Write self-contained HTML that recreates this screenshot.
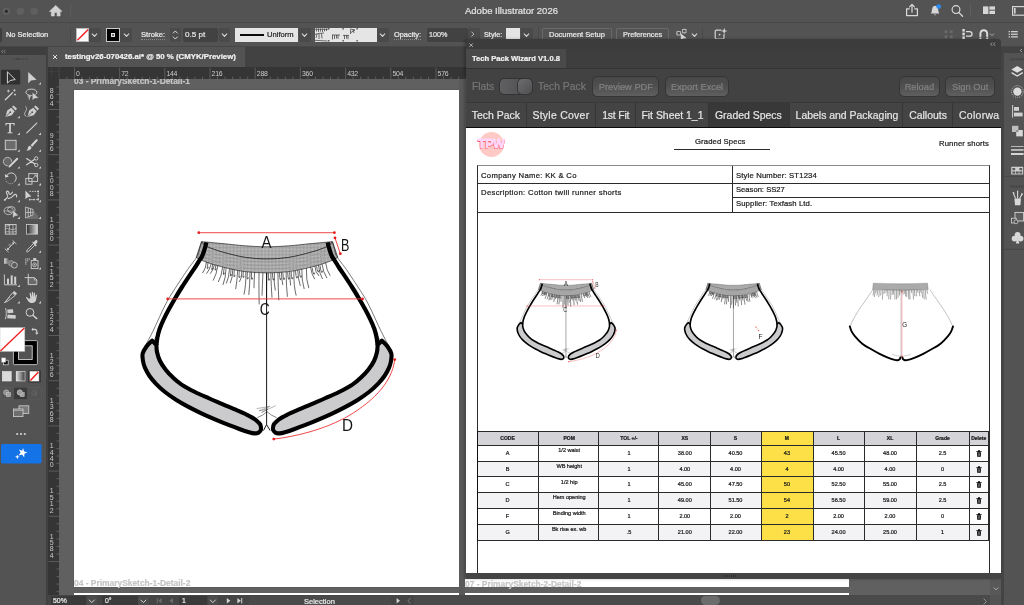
<!DOCTYPE html>
<html>
<head>
<meta charset="utf-8">
<title>Adobe Illustrator 2026</title>
<style>
*{box-sizing:border-box;margin:0;padding:0}
html,body{width:1024px;height:605px;overflow:hidden;background:#535353}
body{position:relative;font-family:"Liberation Sans",sans-serif;color:#e6e6e6;font-size:10px}
.abs{position:absolute}
.t{position:absolute;white-space:nowrap;line-height:1;will-change:transform;-webkit-text-stroke:0.22px}
svg{position:absolute;overflow:visible}
/* top bars */
#titlebar{left:0;top:0;width:1024px;height:22px;background:#535353}
#tline{left:0;top:22px;width:1024px;height:1px;background:#484848}
#ctrlbar{left:0;top:23px;width:1024px;height:23px;background:#535353}
#tabbar{left:0;top:46px;width:1024px;height:21px;background:#424242}
#doctab{left:48px;top:46px;width:197px;height:21px;background:#535353}
#hruler{left:48px;top:67px;width:960px;height:12px;background:#353535}
#vruler{left:48px;top:79px;width:11px;height:516px;background:#353535}
#canvas{left:59px;top:79px;width:950px;height:516px;background:#606060}
#artboard{left:74.3px;top:89.7px;width:384.4px;height:497.1px;background:#fff;box-shadow:0 0 0 0.5px #555}
#artboard2{left:74.3px;top:592.6px;width:384.4px;height:2.4px;background:#fff}
#toolbar{left:0;top:46px;width:48px;height:559px;background:#535353}
#tbhead{left:0;top:46px;width:46px;height:9.4px;background:#3e3e3e}
#statusbar{left:48px;top:595px;width:960px;height:10px;background:#424242}
/* control bar widgets */
.fld{position:absolute;background:#424242;border-radius:2px;height:14px;top:28px}
.dd{position:absolute;background:#4a4a4a;border-radius:2px;height:14px;top:28px;width:11px}
/* plugin panel */
#panel{left:466px;top:39px;width:535.2px;height:539.8px;background:#424242;border-radius:3px 4px 0 0;box-shadow:-2px 0 3px rgba(0,0,0,.25)}
#ptop{left:0;top:0;width:535px;height:10px;background:#3c3c3c;border-radius:3px 4px 0 0}
#ptabrow{left:0;top:10px;width:535px;height:19px;background:#3e3e3e}
#ptab{left:0;top:10px;width:100px;height:19px;background:#4a4a4a}
#pline{left:0;top:29px;width:535px;height:1px;background:#333}
.btn{position:absolute;top:36.8px;height:21px;border-radius:5.5px;border:1px solid #353535;background:linear-gradient(#484848,#4e4e4e 45%,#5f5f61);color:#828282;font-size:9.3px;text-align:center;line-height:20.4px;white-space:nowrap;-webkit-text-stroke:0.2px}
#ntabs{left:0;top:63px;width:535px;height:25px;background:#444;overflow:hidden;border-top:1px solid #383838}
.nt{position:absolute;top:0;height:25px;border-right:1px solid #363636;color:#e6e6e6;font-size:10.45px;line-height:25.2px;-webkit-text-stroke:0.2px;white-space:nowrap;padding-left:5.8px;overflow:hidden}
#pcontent{left:0;top:88px;width:535.2px;height:446px;background:#fff;border-top:1px solid #0c0c0c;color:#111}
#pbottom{left:0;top:534px;width:535px;height:6px;background:#444}
/* dock */
#dock{left:1004.2px;top:47px;width:20px;height:558px;background:#535353}
#dockhead{left:1001.2px;top:46.6px;width:23px;height:6px;background:#424242}
</style>
</head>
<body>
<!-- base regions -->
<div class="abs" id="titlebar"></div>
<div class="abs" id="tline"></div>
<div class="abs" id="ctrlbar"></div>
<div class="abs" id="tabbar"></div>
<div class="abs" id="doctab"></div>
<div class="abs" id="hruler"></div>
<div class="abs" id="canvas"></div>
<div class="abs" id="vruler"></div>
<div class="abs" id="artboard"></div>
<div class="abs" id="artboard2"></div>
<div class="abs" id="toolbar"></div>
<div class="abs" id="tbhead"></div>
<div class="abs" style="left:45.6px;top:46px;width:2.4px;height:559px;background:#414141"></div>
<div class="abs" style="left:0;top:45.6px;width:1024px;height:1px;background:#464646"></div>

<!-- shared symbols -->
<svg width="0" height="0" style="left:0;top:0">
  <defs>
    <symbol id="chev" viewBox="0 0 8 5" overflow="visible"><path d="M1.4 1.1 L4 3.8 L6.6 1.1" fill="none" stroke="#e0e0e0" stroke-width="1.2" stroke-linecap="round" stroke-linejoin="round"/></symbol>
  </defs>
</svg>

<!-- TITLEBAR -->
<svg style="left:0;top:0" width="1024" height="23" viewBox="0 0 1024 23">
  <circle cx="6.4" cy="11.2" r="3.8" fill="#5f5f5f"/><circle cx="6.4" cy="11.2" r="1.5" fill="#262626"/>
  <circle cx="20.3" cy="11.2" r="3.8" fill="#5f5f5f"/>
  <circle cx="34.2" cy="11.2" r="3.8" fill="#5f5f5f"/>
  <!-- home -->
  <path d="M55.7 5.4 L49.4 11.4 L51.3 11.4 L51.3 16 L54.3 16 L54.3 12.6 L57.1 12.6 L57.1 16 L60.1 16 L60.1 11.4 L62 11.4 Z" fill="#d2d2d2" stroke="#d2d2d2" stroke-width="0.6" stroke-linejoin="round"/>
  <rect x="70.2" y="4" width="1" height="13.5" fill="#5e5e5e"/>
  <!-- share -->
  <g fill="none" stroke="#dadada" stroke-width="1.2" stroke-linejoin="round" stroke-linecap="round">
    <path d="M909.2 8.8 H906.6 V15.6 H917.4 V8.8 H914.8"/>
    <path d="M912 12.2 V4.6 M909.6 6.8 L912 4.4 L914.4 6.8"/>
  </g>
  <!-- bell -->
  <path d="M930.8 13.4 C932.2 12.2 931.6 9.6 932.4 7.9 C933 6.5 934 5.8 935.1 5.8 C936.2 5.8 937.2 6.5 937.8 7.9 C938.6 9.6 938 12.2 939.4 13.4 Z" fill="#d6d6d6"/>
  <path d="M933.9 14.4 H936.3 L935.1 15.6 Z" fill="#d6d6d6"/>
  <circle cx="938.7" cy="6.6" r="2.4" fill="#2b8cf0"/>
  <!-- search -->
  <circle cx="956" cy="9.6" r="3.9" fill="none" stroke="#dadada" stroke-width="1.2"/>
  <path d="M958.9 12.6 L962.6 16.2" stroke="#dadada" stroke-width="1.3" stroke-linecap="round"/>
  <rect x="970" y="4" width="1" height="13.5" fill="#5e5e5e"/>
  <!-- workspace -->
  <rect x="983" y="6.4" width="5.4" height="7.6" fill="#d6d6d6"/>
  <rect x="989.4" y="6.4" width="5.6" height="3.3" fill="#d6d6d6"/>
  <rect x="989.4" y="10.7" width="5.6" height="3.3" fill="#d6d6d6"/>
  <!-- arrange docs -->
  <rect x="1012.6" y="6.6" width="14" height="8.6" fill="none" stroke="#d6d6d6" stroke-width="1.2"/>
  <rect x="1014" y="8" width="1.6" height="5.6" fill="#d6d6d6"/>
</svg>
<div class="t" style="left:464.6px;top:5.9px;font-size:9.5px;color:#e2e2e2">Adobe Illustrator 2026</div>

<!-- CONTROLBAR -->
<div class="abs" style="left:0;top:28px;width:1.5px;height:14px;background:#3e3e3e"></div>
<div class="t" style="left:6.4px;top:31.2px;font-size:7.45px;color:#ececec">No Selection</div>
<div class="abs" style="left:70.2px;top:26px;width:1px;height:17px;background:#4b4b4b"></div>
<!-- fill swatch -->
<div class="abs" style="left:75.5px;top:28px;width:13.5px;height:13.5px;background:#fff;border:0.5px solid #bbb"></div>
<svg style="left:75.5px;top:28px" width="13.5" height="13.5"><path d="M1.4 12.2 L12.2 1.4" stroke="#f21d1d" stroke-width="1.4"/></svg>
<div class="dd" style="left:89px;top:28px;width:11.5px;height:13.5px"></div>
<svg style="left:91.3px;top:33px" width="7" height="4.4"><use href="#chev"/></svg>
<!-- stroke swatch -->
<div class="abs" style="left:106px;top:28px;width:14px;height:13.5px;background:#000;border:0.7px solid #c8c8c8"></div>
<div class="abs" style="left:110.8px;top:32.6px;width:4.6px;height:4.6px;background:#bdbdbd;border:0.9px solid #e6e6e6"></div>
<div class="abs" style="left:112.2px;top:34px;width:1.8px;height:1.8px;background:#6a6a6a"></div>
<div class="dd" style="left:120px;top:28px;width:12px;height:13.5px"></div>
<svg style="left:122.8px;top:33px" width="7" height="4.4"><use href="#chev"/></svg>
<div class="t" style="left:141px;top:31.2px;font-size:7.6px;color:#ececec;border-bottom:0.6px dotted #8c8c8c;padding-bottom:0.2px">Stroke:</div>
<!-- stepper -->
<div class="dd" style="left:170px;top:28px;width:11px;height:13.5px"></div>
<svg style="left:172.3px;top:29.6px" width="6.6" height="4" viewBox="0 0 8 5"><path d="M1.4 3.9 L4 1.2 L6.6 3.9" fill="none" stroke="#e0e0e0" stroke-width="1.2" stroke-linecap="round" stroke-linejoin="round"/></svg>
<svg style="left:172.3px;top:36.2px" width="6.6" height="4"><use href="#chev"/></svg>
<div class="fld" style="left:182.5px;top:28px;width:35px;height:13.5px"></div>
<div class="t" style="left:184.6px;top:31px;font-size:8.1px;color:#e6e6e6">0.5 pt</div>
<div class="dd" style="left:218.5px;top:28px;width:11.5px;height:13.5px"></div>
<svg style="left:220.8px;top:33px" width="7" height="4.4"><use href="#chev"/></svg>
<!-- uniform -->
<div class="abs" style="left:235px;top:28px;width:63px;height:13.5px;background:#e5e5e5"></div>
<div class="abs" style="left:239.5px;top:34.4px;width:24.5px;height:1.7px;background:#0c0c0c"></div>
<div class="t" style="left:267px;top:31.2px;font-size:7.6px;color:#262626">Uniform</div>
<div class="dd" style="left:299px;top:28px;width:11.5px;height:13.5px"></div>
<svg style="left:301.3px;top:33px" width="7" height="4.4"><use href="#chev"/></svg>
<!-- brush def -->
<div class="abs" style="left:315px;top:28px;width:61.5px;height:13.5px;background:#e5e5e5"></div>
<svg style="left:315px;top:28px" width="61.5" height="13.5" viewBox="0 0 61.5 13.5">
  <g stroke="#333" stroke-width="0.7" fill="none">
    <path d="M0 1.2 H13 M1.5 0.5 V3.5 M3.5 0.5 V4 M5.5 0.5 V3.6 M7.5 0.5 V4 M9.5 0.5 V3.4 M11.5 0.5 V3"/>
    <path d="M0 6.5 C3 5 6 5.5 9 5 M2 6 L1 10 M4 5.5 V11 M6.5 5.5 L7 10.5 M0 12.3 C4 12.8 8 12.6 12.5 13"/>
    <path d="M17.5 7 V11.5 M19.5 7.2 V11 M21.5 7 V10.5 M17 7 H25 M23 7 V10.8"/>
    <path d="M28 7.4 H34 M29.5 7.4 V11 M31.5 7.4 V10.6 M33 7.4 V11.2"/>
    <path d="M35 1 L40 2 L36 4.5 M35.5 2 V6 M38 1.5 L39 5"/>
  </g>
  <rect x="13.3" y="0" width="1" height="1.6" fill="#222"/><rect x="13.3" y="12" width="1" height="1.5" fill="#222"/>
  <rect x="27.6" y="0" width="1" height="1.6" fill="#222"/><rect x="27.6" y="12" width="1" height="1.5" fill="#222"/>
  <rect x="41.6" y="0" width="1" height="1.6" fill="#222"/><rect x="41.6" y="12" width="1" height="1.5" fill="#222"/>
</svg>
<div class="dd" style="left:377px;top:28px;width:11.5px;height:13.5px"></div>
<svg style="left:379.2px;top:33px" width="7" height="4.4"><use href="#chev"/></svg>
<div class="t" style="left:394.2px;top:31.2px;font-size:7.4px;color:#ececec;border-bottom:0.6px dotted #8c8c8c;padding-bottom:0.2px">Opacity:</div>
<div class="fld" style="left:427px;top:28px;width:40.5px;height:13.5px"></div>
<div class="t" style="left:429px;top:31.3px;font-size:7.2px;color:#e6e6e6">100%</div>
<div class="dd" style="left:468px;top:28px;width:12px;height:13.5px"></div>
<svg style="left:471.4px;top:31.4px" width="3.6" height="6.2" viewBox="0 0 5 8"><path d="M1 1 L4 4 L1 7" fill="none" stroke="#dcdcdc" stroke-width="1.1" stroke-linecap="round" stroke-linejoin="round"/></svg>
<div class="t" style="left:484px;top:31.2px;font-size:7.3px;color:#ececec">Style:</div>
<div class="abs" style="left:506px;top:28px;width:14px;height:13.5px;background:#e5e5e5"></div>
<div class="dd" style="left:521px;top:28px;width:12px;height:13.5px"></div>
<svg style="left:523.4px;top:33px" width="7" height="4.4"><use href="#chev"/></svg>
<div class="abs" style="left:537.5px;top:26px;width:1px;height:17px;background:#4b4b4b"></div>
<div class="abs" style="left:542px;top:27.5px;width:69.5px;height:14.5px;border:1px solid #6a6a6a;border-radius:2px"></div>
<div class="t" style="left:549px;top:31.3px;font-size:7.5px;color:#e8e8e8">Document Setup</div>
<div class="abs" style="left:616px;top:27.5px;width:53px;height:14.5px;border:1px solid #6a6a6a;border-radius:2px"></div>
<div class="t" style="left:622.8px;top:31.3px;font-size:7.25px;color:#e8e8e8">Preferences</div>
<!-- select similar icon -->
<svg style="left:675px;top:28px" width="26" height="14" viewBox="0 0 26 14">
  <g fill="none" stroke="#cfcfcf" stroke-width="0.8"><rect x="2" y="3.6" width="3.4" height="3.4"/><rect x="7.6" y="1.4" width="3.4" height="3.4"/></g>
  <path d="M1 5.3 H2 M5.4 5.3 H6.4 M9.3 0.6 V1.4 M9.3 4.8 V5.6" stroke="#cfcfcf" stroke-width="0.7"/>
  <path d="M5.8 5.4 L5.8 12.2 L8 10.4 L11.8 10.2 Z" fill="#d8d8d8"/>
</svg>
<svg style="left:691px;top:33px" width="7" height="4.4"><use href="#chev"/></svg>
<div class="abs" style="left:702px;top:26px;width:1px;height:17px;background:#4b4b4b"></div>
<!-- generative icon -->
<svg style="left:713px;top:27px" width="16" height="14" viewBox="0 0 16 14">
  <path d="M8 3.2 H3.4 Q2.2 3.2 2.2 4.4 V10.8 Q2.2 12 3.4 12 H9.8 Q11 12 11 10.8 V7.4" fill="none" stroke="#d4d4d4" stroke-width="1.2" stroke-linecap="round"/>
  <path d="M5.8 6.6 L8 7.7 L5.8 8.8 Z" fill="#d4d4d4"/>
  <path d="M11.2 0.8 L12 3.2 L14.4 4 L12 4.8 L11.2 7.2 L10.4 4.8 L8 4 L10.4 3.2 Z" fill="#d4d4d4"/>
</svg>
<!-- right icons of control bar -->
<svg style="left:940px;top:26px" width="84" height="18" viewBox="0 0 84 18">
  <g fill="#6a6a6a"><rect x="4.6" y="4.4" width="2.8" height="2.8"/><rect x="9.8" y="4.4" width="2.8" height="2.8"/><rect x="4.6" y="9.4" width="2.8" height="2.8"/><rect x="9.8" y="9.4" width="2.8" height="2.8"/></g>
  <g fill="#dcdcdc"><rect x="22.4" y="3" width="2.4" height="2.6"/><rect x="22.4" y="6.6" width="2.4" height="2.8"/><rect x="22.4" y="10.4" width="2.4" height="2.8"/></g>
  <path d="M26 5.6 H29.6 Q32 5.6 32 7.9 Q32 10.2 29.6 10.2 H26" fill="none" stroke="#dcdcdc" stroke-width="1.3"/>
  <path d="M40.4 13 V8 Q40.4 4.2 43.8 4.2 Q47.2 4.2 47.2 8 V13" fill="none" stroke="#dcdcdc" stroke-width="1.9"/>
  <path d="M39.4 11.3 H41.4 M46.2 11.3 H48.2" stroke="#535353" stroke-width="0.7"/>
  <path d="M50 7.6 L52 9.6 L54 7.6" fill="none" stroke="#bdbdbd" stroke-width="0.8"/>
  <g fill="#cfcfcf"><rect x="68.6" y="5" width="1.4" height="1.3"/><rect x="71" y="5" width="6.8" height="1.3"/><rect x="68.6" y="7.6" width="1.4" height="1.3"/><rect x="71" y="7.6" width="6.8" height="1.3"/><rect x="68.6" y="10.2" width="1.4" height="1.3"/><rect x="71" y="10.2" width="6.8" height="1.3"/></g>
</svg>

<!-- DOC TAB -->
<svg style="left:52.4px;top:53.6px" width="6" height="6" viewBox="0 0 6 6"><path d="M1 1 L5 5 M5 1 L1 5" stroke="#e2e2e2" stroke-width="1"/></svg>
<div class="t" style="left:64.6px;top:52.6px;font-size:7.82px;font-weight:bold;color:#f2f2f2">testingv26-070426.ai* @ 50 % (CMYK/Preview)</div>
<!-- toolbar header chevrons -->
<svg style="left:0.5px;top:48.6px" width="5" height="5" viewBox="0 0 5 5"><path d="M2 0.8 L0.6 2.5 L2 4.2 M4.4 0.8 L3 2.5 L4.4 4.2" fill="none" stroke="#9a9a9a" stroke-width="0.7"/></svg>
<div class="abs" style="left:14px;top:57.6px;width:14px;height:2.6px;background:repeating-linear-gradient(90deg,#454545 0 1.4px,#535353 1.4px 2.2px)"></div>

<!-- TOOLBAR ICONS -->
<svg style="left:0;top:66px;will-change:transform" width="48" height="410" viewBox="0 66 48 410">
  <rect x="1" y="69.8" width="19.2" height="14.8" rx="1.2" fill="#303030"/>
  <g fill="none" stroke="#d4d4d4" stroke-width="1" stroke-linejoin="round" stroke-linecap="round">
    <!-- r1 selection (outline) -->
    <path d="M7.4 72.2 V83.2 L10.2 80.5 L14.9 79.6 Z"/>
  </g>
  <g fill="#cfcfcf">
    <!-- direct selection (filled) -->
    <path d="M28.2 72 V83.6 L31 80.6 L36.6 79.7 Z"/>
    <!-- corner triangles -->
    <path d="M41 82.2 V84.6 H38.6 Z"/>
    <path d="M19.8 115.8 V118.2 H17.4 Z"/>
    <path d="M19.8 132.6 V135 H17.4 Z"/><path d="M41 132.6 V135 H38.6 Z"/>
    <path d="M19.8 149.4 V151.8 H17.4 Z"/><path d="M41 149.4 V151.8 H38.6 Z"/>
    <path d="M19.8 166.2 V168.6 H17.4 Z"/><path d="M41 166.2 V168.6 H38.6 Z"/>
    <path d="M19.8 183 V185.4 H17.4 Z"/><path d="M41 183 V185.4 H38.6 Z"/>
    <path d="M19.8 199.8 V202.2 H17.4 Z"/><path d="M41 199.8 V202.2 H38.6 Z"/>
    <path d="M19.8 216.6 V219 H17.4 Z"/><path d="M41 216.6 V219 H38.6 Z"/>
    <path d="M41 250.4 V252.8 H38.6 Z"/>
    <path d="M41 267.2 V269.6 H38.6 Z"/>
    <path d="M19.8 284.6 V287 H17.4 Z"/>
    <path d="M19.8 301 V303.4 H17.4 Z"/><path d="M41 301 V303.4 H38.6 Z"/>
  </g>
  <!-- r2 magic wand -->
  <path d="M5.3 99.8 L12.6 92.6" stroke="#d4d4d4" stroke-width="1.3" stroke-linecap="round"/>
  <path d="M8.4 89.6 V92.4 M7 91 H9.8 M14.4 89.2 V91.6 M13.2 90.4 H15.6 M15 93.6 V95.6 M14 94.6 H16" stroke="#d4d4d4" stroke-width="0.8"/>
  <!-- lasso + arrow -->
  <ellipse cx="31.4" cy="92.3" rx="5.5" ry="3.2" fill="none" stroke="#cfcfcf" stroke-width="1"/>
  <path d="M28.6 94.8 C27.6 96.2 28.4 97.8 29.6 97.6 C30.8 97.4 30.6 95.8 29.4 96 C29 97.6 29.6 98.8 29.2 100" fill="none" stroke="#cfcfcf" stroke-width="0.8"/>
  <path d="M32.3 92.2 V100.6 L34.4 98.5 L38.8 98 Z" fill="#d2d2d2" stroke="#535353" stroke-width="0.5"/>
  <!-- r3 pen -->
  <g fill="#cfcfcf">
    <path d="M5.4 117 L7.2 110.6 L11.2 107.8 L14.6 111.2 L11.8 115.2 Z"/>
    <path d="M12 106.8 L13.6 105.4 L17 108.8 L15.6 110.4 Z"/>
  </g>
  <path d="M5.6 116.8 L9.8 112.6" stroke="#535353" stroke-width="0.8"/>
  <circle cx="10.2" cy="112.2" r="0.9" fill="#535353"/>
  <!-- curvature pen -->
  <g fill="#cfcfcf">
    <path d="M27.4 117 L29.2 110.6 L33.2 107.8 L36.6 111.2 L33.8 115.2 Z"/>
    <path d="M34 106.8 L35.6 105.4 L39 108.8 L37.6 110.4 Z"/>
  </g>
  <path d="M27.6 116.8 L31.8 112.6" stroke="#535353" stroke-width="0.8"/>
  <circle cx="32.2" cy="112.2" r="0.9" fill="#535353"/>
  <path d="M25.4 106.4 C27.6 107.8 26.4 110.4 25.2 112 C24 113.8 24.6 115.8 26.4 116.6" fill="none" stroke="#cfcfcf" stroke-width="0.8"/>
  <!-- r4 type / line -->
  <text x="5.6" y="133.4" font-family="Liberation Serif" font-size="14.8" fill="#dadada" stroke="#dadada" stroke-width="0.25">T</text>
  <path d="M26.8 132.8 L36.8 123.2" stroke="#d4d4d4" stroke-width="1.1" stroke-linecap="round"/>
  <!-- r5 rect / brush -->
  <rect x="5.3" y="140.3" width="10.8" height="9.4" fill="#6c6c6c" stroke="#d4d4d4" stroke-width="0.9"/>
  <path d="M37.4 139.4 L36.2 139.2 L30.6 145.2 L32.2 146.8 L37.8 140.6 Z" fill="#d4d4d4"/>
  <path d="M30 145.8 C28.6 146 27.8 147.2 27.8 148.4 C27.6 149.4 26.8 150 26.2 150.2 C28.2 151 30.8 150.4 31.6 147.6 Z" fill="#d4d4d4"/>
  <!-- r6 shaper / scissors -->
  <circle cx="7.6" cy="161.6" r="4.2" fill="#686868" stroke="#d0d0d0" stroke-width="0.8"/>
  <path d="M9.2 166.8 L17.4 158.6" stroke="#535353" stroke-width="3.4"/>
  <path d="M9.6 166.4 L17.2 158.8" stroke="#d4d4d4" stroke-width="2" stroke-linecap="round"/>
  <path d="M8.6 167.4 L9.4 165.2 L10.8 166.6 Z" fill="#d4d4d4"/>
  <path d="M26.6 158.6 L34.6 163.8 M26.6 164.8 L34.4 159.6" stroke="#d4d4d4" stroke-width="1.2" stroke-linecap="round"/>
  <circle cx="36.2" cy="158.4" r="1.7" fill="none" stroke="#d4d4d4" stroke-width="0.9"/>
  <circle cx="36.2" cy="165" r="1.7" fill="none" stroke="#d4d4d4" stroke-width="0.9"/>
  <!-- r7 rotate / scale -->
  <path d="M6.4 176.6 A5 5 0 1 1 14.6 181.6" fill="none" stroke="#d4d4d4" stroke-width="1"/>
  <path d="M14.6 181.6 A5 5 0 0 1 5.6 179.4" fill="none" stroke="#bdbdbd" stroke-width="0.8" stroke-dasharray="1.2 1"/>
  <path d="M4.8 174 L5.4 177.8 L8.8 176.6 Z" fill="#d4d4d4"/>
  <rect x="28.8" y="173.6" width="8.8" height="7.8" fill="none" stroke="#d0d0d0" stroke-width="0.9"/>
  <rect x="25.8" y="178.4" width="6.2" height="5.8" fill="none" stroke="#d0d0d0" stroke-width="0.9"/>
  <path d="M32.6 178.6 L36.2 175.2 M34.2 175 H36.4 V177.2" fill="none" stroke="#d0d0d0" stroke-width="0.8"/>
  <!-- r8 warp / free transform -->
  <path d="M4.4 200 C6.6 198.6 8 197.2 7.6 195.4 C7.2 193.6 5.8 193 6.6 191.6 C7.6 190.4 9.2 192 9 193.6 C10.2 195.2 11.6 193.6 12.4 192.2 M8.4 198.4 C10.6 199 12.6 196.4 14 195 C15.4 193.8 17 194.4 16.6 196.8" fill="none" stroke="#d0d0d0" stroke-width="1.2" stroke-linecap="round"/>
  <circle cx="5" cy="199.8" r="0.9" fill="#d0d0d0"/><circle cx="8.4" cy="196" r="0.8" fill="#535353"/>
  <path d="M25.4 190.6 V199.2 L27.8 197.2 L31.4 196.6 Z" fill="#cfcfcf"/>
  <path d="M29.4 191.4 H38.2 V199.6 H29.6" fill="none" stroke="#cfcfcf" stroke-width="0.9" stroke-dasharray="1.6 0.9"/>
  <g fill="#cfcfcf"><rect x="37.4" y="190.6" width="1.6" height="1.6"/><rect x="37.4" y="198.8" width="1.6" height="1.6"/><rect x="37.4" y="194.8" width="1.4" height="1.4"/><rect x="33" y="198.9" width="1.4" height="1.4"/><rect x="29" y="198.8" width="1.6" height="1.6"/></g>
  <!-- r9 shape builder / perspective -->
  <ellipse cx="8.6" cy="210.8" rx="4.6" ry="3.8" fill="none" stroke="#cfcfcf" stroke-width="0.8"/>
  <ellipse cx="11.4" cy="209.6" rx="3.8" ry="3" fill="none" stroke="#cfcfcf" stroke-width="0.8"/>
  <path d="M4 211 H12" stroke="#cfcfcf" stroke-width="0.6"/>
  <path d="M12.8 209.8 V218.2 L14.8 216.2 L18.4 215.6 Z" fill="#cfcfcf" stroke="#535353" stroke-width="0.4"/>
  <path d="M25.6 207 V218 L33 215 V209.4 Z M28.2 208 V217 M30.6 208.8 V216 M25.6 212.4 H33" fill="none" stroke="#cfcfcf" stroke-width="0.8"/>
  <path d="M33.2 212.2 H35 M33.2 214 H36.6 M31 216 H38 M27 218 H38.4" stroke="#a8a8a8" stroke-width="0.6"/>
  <!-- r10 mesh / gradient -->
  <rect x="5.3" y="224.5" width="10.8" height="9.6" fill="none" stroke="#d0d0d0" stroke-width="0.9"/>
  <path d="M5.3 229 C8 227.4 11 231 16 228.6 M9 224.5 C10.6 227 8 230.6 9.6 234 M12.6 224.5 C14 227.4 11.8 231 13.2 234 M5.3 232 C8.4 231 12 233 16 231.4 M5.6 226.4 C8 226 10 225 11 224.6" fill="none" stroke="#d0d0d0" stroke-width="0.7"/>
  <defs><linearGradient id="tg1" x1="0" x2="1" y1="0" y2="0"><stop offset="0" stop-color="#2a2a2a"/><stop offset="1" stop-color="#d8d8d8"/></linearGradient>
  <linearGradient id="tg2" x1="0" x2="1" y1="0" y2="0"><stop offset="0" stop-color="#e2e2e2"/><stop offset="1" stop-color="#3a3a3a"/></linearGradient></defs>
  <rect x="26.4" y="224.5" width="11" height="9.6" fill="url(#tg1)" stroke="#d0d0d0" stroke-width="0.8"/>
  <!-- r11 measure / eyedropper -->
  <path d="M6.8 250.2 L14.4 242.2" stroke="#d0d0d0" stroke-width="1"/>
  <path d="M4.8 248.6 L8.6 252.2 M12.6 240.4 L16.4 244" stroke="#d0d0d0" stroke-width="0.9"/>
  <path d="M7.4 247.6 L7 250 L9.4 249.8 Z M13.8 244.8 L14.2 242.4 L11.8 242.6 Z" fill="#d0d0d0"/>
  <path d="M8.4 245 L10.4 244 M9.4 246.4 L11 245" stroke="#d0d0d0" stroke-width="0.6"/>
  <path d="M33.2 243.8 L27.2 250 Q26 251.6 26.8 252 Q27.6 252.2 28.8 251.2 L34.8 245.2" fill="none" stroke="#d0d0d0" stroke-width="0.9"/>
  <path d="M32.2 242.6 L35.8 246.4 L36.8 245.4 L35.8 244.2 L37.4 242.4 Q38 240.8 36.8 240.2 Q35.6 239.8 34.8 241 L33.8 242.2 L33 241.6 Z" fill="#d0d0d0"/>
  <!-- r12 blend / symbol sprayer -->
  <rect x="4.2" y="258.2" width="5.6" height="5.6" fill="url(#tg2)"/>
  <circle cx="10.6" cy="263" r="2.8" fill="#777" stroke="#9a9a9a" stroke-width="0.6"/>
  <circle cx="12.4" cy="264" r="2.9" fill="#666" stroke="#aaa" stroke-width="0.6"/>
  <circle cx="14.4" cy="265.2" r="2.9" fill="#5a5a5a" stroke="#d0d0d0" stroke-width="0.8"/>
  <g fill="#bdbdbd"><rect x="25.2" y="258.4" width="1.2" height="1.2"/><rect x="27" y="258.4" width="1.2" height="1.2"/><rect x="28.8" y="258.4" width="1.2" height="1.2"/><rect x="25.2" y="260.2" width="1.2" height="1.2"/><rect x="27" y="260.2" width="1.2" height="1.2"/><rect x="25.2" y="262" width="1.2" height="1.2"/><rect x="25.2" y="263.6" width="1.2" height="1"/></g>
  <rect x="31.2" y="260.6" width="6.8" height="8" fill="none" stroke="#d0d0d0" stroke-width="0.9"/>
  <rect x="33.2" y="258" width="3" height="2" fill="#d0d0d0"/>
  <circle cx="34.6" cy="264.8" r="1.9" fill="none" stroke="#d0d0d0" stroke-width="0.8"/><circle cx="34.6" cy="264.8" r="0.7" fill="#d0d0d0"/>
  <!-- r13 graph / artboard -->
  <path d="M4.4 274.4 V284.8 H17" fill="none" stroke="#d0d0d0" stroke-width="0.9"/>
  <g fill="#d0d0d0"><rect x="7" y="278.6" width="2" height="5.6"/><rect x="10.7" y="275.4" width="2" height="8.8"/><rect x="14.2" y="276.6" width="2" height="7.6"/></g>
  <path d="M28.3 273.8 V284.6 M24.6 277.6 H32" stroke="#d0d0d0" stroke-width="0.9"/>
  <path d="M28.3 277.6 H34.4 L36.8 280 V284.6 H28.3 Z" fill="#6a6a6a" stroke="#d0d0d0" stroke-width="0.9"/>
  <path d="M34.4 277.6 V280 H36.8" fill="none" stroke="#d0d0d0" stroke-width="0.7"/>
  <!-- r14 slice / hand -->
  <path d="M4.6 302.6 L12.4 293 L15.2 295.4 L8 301 Z" fill="none" stroke="#d0d0d0" stroke-width="0.9" stroke-linejoin="round"/>
  <path d="M12.6 292.6 L14.2 291 L17 293.6 L15.6 295.2 Z" fill="#d0d0d0"/>
  <path d="M4.6 302.6 L10 297" stroke="#d0d0d0" stroke-width="0.6"/>
  <path d="M28.6 298.8 C27.6 297.6 26.6 296.8 26 297 C25.6 297.6 26.8 298.8 27.8 300.4 C29 302.2 30.2 303 32.2 303 C34.6 303 35.8 301.6 36.2 299.6 L37 295.2 C37 294.4 36 294.4 35.8 295.2 L35.2 297.4 L35 293 C35 292.2 33.8 292.2 33.8 293 L33.6 297 L33 292.2 C32.9 291.4 31.7 291.5 31.8 292.3 L32 297 L30.8 293.2 C30.5 292.4 29.4 292.8 29.6 293.6 L30.4 298.4 Z" fill="#d0d0d0"/>
  <!-- r15 align-ish / zoom -->
  <path d="M5.6 308 C6.6 311.6 6.6 315.4 5.4 319.2" fill="none" stroke="#d0d0d0" stroke-width="0.9"/>
  <path d="M7.2 309.6 L13 309.2 L13.4 312.8 L7.6 313.2 Z M7.6 314.6 L15.8 315.2 L15.6 318.8 L7.2 318.2 Z" fill="#cfcfcf"/>
  <circle cx="30" cy="312.4" r="3.9" fill="none" stroke="#d4d4d4" stroke-width="1"/>
  <path d="M32.8 315.2 L36.8 318.6" stroke="#d4d4d4" stroke-width="1.4" stroke-linecap="round"/>
  <!-- fill / stroke -->
  <rect x="13.4" y="340.6" width="24" height="24" rx="1" fill="#000" stroke="#d8d8d8" stroke-width="0.8"/>
  <rect x="18.6" y="345.8" width="13.6" height="13.6" fill="#535353" stroke="#e8e8e8" stroke-width="0.8"/>
  <rect x="0" y="327.6" width="24.8" height="23.8" fill="#fff" stroke="#bdbdbd" stroke-width="0.5"/>
  <path d="M0.4 351 L24.4 328" stroke="#f21d1d" stroke-width="1.3"/>
  <!-- swap arrows -->
  <path d="M32.6 329.4 H34.6 Q36.8 329.4 36.8 331.8 V333.4" fill="none" stroke="#d0d0d0" stroke-width="1.2"/>
  <path d="M33.2 327.6 L31.4 329.4 L33.2 331.2 Z M35 332.8 L36.8 334.8 L38.6 332.8 Z" fill="#d0d0d0"/>
  <!-- default fill/stroke -->
  <rect x="3.6" y="360.2" width="4.6" height="4.6" fill="#111" stroke="#e0e0e0" stroke-width="0.7"/>
  <rect x="1.4" y="357.8" width="4.4" height="4.4" fill="#fff" stroke="#888" stroke-width="0.5"/>
  <!-- color mode buttons -->
  <rect x="28" y="370.2" width="13" height="12.6" rx="1" fill="#3a3a3a"/>
  <rect x="2.4" y="371.6" width="8.8" height="9.4" fill="#d9d9d9" stroke="#efefef" stroke-width="0.6"/>
  <rect x="16.2" y="371.6" width="8.8" height="9.4" fill="url(#tg2)" stroke="#efefef" stroke-width="0.6"/>
  <rect x="30" y="371.6" width="8.8" height="9.4" fill="#fff" stroke="#efefef" stroke-width="0.6"/>
  <path d="M30.4 380.6 L38.4 372" stroke="#f21d1d" stroke-width="1.4"/>
  <!-- draw modes -->
  <rect x="0.8" y="387.6" width="40.6" height="11.6" rx="1" fill="none" stroke="#5e5e5e" stroke-width="0.6"/>
  <rect x="14.2" y="387.6" width="12.8" height="11.6" fill="#3a3a3a"/>
  <circle cx="6.2" cy="392.4" r="2.6" fill="#8a8a8a" stroke="#c4c4c4" stroke-width="0.6"/><rect x="6.4" y="392.6" width="4" height="4" fill="#a0a0a0" stroke="#d0d0d0" stroke-width="0.5"/>
  <rect x="20.2" y="392.6" width="4" height="4" fill="#a0a0a0" stroke="#d0d0d0" stroke-width="0.5"/><circle cx="19.8" cy="392.4" r="2.6" fill="#9a9a9a" stroke="#d4d4d4" stroke-width="0.6"/>
  <circle cx="34.4" cy="393" r="2.6" fill="none" stroke="#6e6e6e" stroke-width="0.6"/><circle cx="35" cy="393.4" r="1" fill="#6a6a6a"/>
  <!-- screen mode -->
  <rect x="19" y="405.8" width="9.8" height="7.6" fill="#7a7a7a" stroke="#d0d0d0" stroke-width="0.8"/>
  <rect x="13.4" y="409" width="9.6" height="7.6" fill="#6e6e6e" stroke="#d0d0d0" stroke-width="0.8"/>
  <path d="M13.4 410.4 H23" stroke="#d0d0d0" stroke-width="0.6"/>
  <!-- dots -->
  <circle cx="17.2" cy="434" r="1.1" fill="#d4d4d4"/><circle cx="21" cy="434" r="1.1" fill="#d4d4d4"/><circle cx="24.8" cy="434" r="1.1" fill="#d4d4d4"/>
  <!-- blue button -->
  <rect x="1" y="444" width="40.6" height="19.4" rx="1.6" fill="#1473e6"/>
  <path d="M23 448 L24.2 451.6 L27.4 452.2 L24.4 453.8 L24.2 457.2 L22 454.6 L18.6 455.4 L20.6 452.6 L19 449.6 L22.2 450.8 Z" fill="#fff"/>
  <path d="M17.4 454.4 L17.9 456.3 L19.6 456.8 L17.9 457.5 L17.4 459.2 L16.7 457.5 L15 456.8 L16.7 456.3 Z" fill="#fff"/>
</svg>

<!-- RULERS -->
<svg style="left:48px;top:67px;will-change:transform" width="960" height="12" viewBox="48 67 960 12">
<path d="M51.5 67.5 V78.5 M48.5 71.5 H58.5" stroke="#555" stroke-width="0.6" stroke-dasharray="0.8 0.8"/>
<rect x="58.6" y="67" width="0.8" height="12" fill="#4a4a4a"/>
<path d="M74.4 67.6 V79 M119.6 67.6 V79 M164.8 67.6 V79 M210.0 67.6 V79 M255.2 67.6 V79 M300.4 67.6 V79 M345.6 67.6 V79 M390.8 67.6 V79 M436.0 67.6 V79 M481.2 67.6 V79 M526.4 67.6 V79 M571.6 67.6 V79 M616.8 67.6 V79 M662.0 67.6 V79 M707.2 67.6 V79 M752.4 67.6 V79 M797.6 67.6 V79 M842.8 67.6 V79 M888.0 67.6 V79 M933.2 67.6 V79 M978.4 67.6 V79" stroke="#6a6a6a" stroke-width="0.7"/>
<path d="M66.9 76.6 V79 M81.9 76.6 V79 M89.5 76.6 V79 M97.0 76.6 V79 M104.5 76.6 V79 M112.1 76.6 V79 M127.1 76.6 V79 M134.7 76.6 V79 M142.2 76.6 V79 M149.7 76.6 V79 M157.3 76.6 V79 M172.3 76.6 V79 M179.9 76.6 V79 M187.4 76.6 V79 M194.9 76.6 V79 M202.5 76.6 V79 M217.5 76.6 V79 M225.1 76.6 V79 M232.6 76.6 V79 M240.1 76.6 V79 M247.7 76.6 V79 M262.7 76.6 V79 M270.3 76.6 V79 M277.8 76.6 V79 M285.3 76.6 V79 M292.9 76.6 V79 M307.9 76.6 V79 M315.5 76.6 V79 M323.0 76.6 V79 M330.5 76.6 V79 M338.1 76.6 V79 M353.1 76.6 V79 M360.7 76.6 V79 M368.2 76.6 V79 M375.7 76.6 V79 M383.3 76.6 V79 M398.3 76.6 V79 M405.9 76.6 V79 M413.4 76.6 V79 M420.9 76.6 V79 M428.5 76.6 V79 M443.5 76.6 V79 M451.1 76.6 V79 M458.6 76.6 V79 M466.1 76.6 V79 M473.7 76.6 V79 M488.7 76.6 V79 M496.3 76.6 V79 M503.8 76.6 V79 M511.3 76.6 V79 M518.9 76.6 V79 M533.9 76.6 V79 M541.5 76.6 V79 M549.0 76.6 V79 M556.5 76.6 V79 M564.1 76.6 V79 M579.1 76.6 V79 M586.7 76.6 V79 M594.2 76.6 V79 M601.7 76.6 V79 M609.3 76.6 V79 M624.3 76.6 V79 M631.9 76.6 V79 M639.4 76.6 V79 M646.9 76.6 V79 M654.5 76.6 V79 M669.5 76.6 V79 M677.1 76.6 V79 M684.6 76.6 V79 M692.1 76.6 V79 M699.7 76.6 V79 M714.7 76.6 V79 M722.3 76.6 V79 M729.8 76.6 V79 M737.3 76.6 V79 M744.9 76.6 V79 M759.9 76.6 V79 M767.5 76.6 V79 M775.0 76.6 V79 M782.5 76.6 V79 M790.1 76.6 V79 M805.1 76.6 V79 M812.7 76.6 V79 M820.2 76.6 V79 M827.7 76.6 V79 M835.3 76.6 V79 M850.3 76.6 V79 M857.9 76.6 V79 M865.4 76.6 V79 M872.9 76.6 V79 M880.5 76.6 V79 M895.5 76.6 V79 M903.1 76.6 V79 M910.6 76.6 V79 M918.1 76.6 V79 M925.7 76.6 V79 M940.7 76.6 V79 M948.3 76.6 V79 M955.8 76.6 V79 M963.3 76.6 V79 M970.9 76.6 V79 M985.9 76.6 V79 M993.5 76.6 V79 M1001.0 76.6 V79" stroke="#6e6e6e" stroke-width="0.7"/>
<text x="76.0" y="75.6" font-size="6.9" letter-spacing="-0.25" fill="#cacaca" font-family="Liberation Sans">0</text>
<text x="121.2" y="75.6" font-size="6.9" letter-spacing="-0.25" fill="#cacaca" font-family="Liberation Sans">72</text>
<text x="166.4" y="75.6" font-size="6.9" letter-spacing="-0.25" fill="#cacaca" font-family="Liberation Sans">144</text>
<text x="211.6" y="75.6" font-size="6.9" letter-spacing="-0.25" fill="#cacaca" font-family="Liberation Sans">216</text>
<text x="256.8" y="75.6" font-size="6.9" letter-spacing="-0.25" fill="#cacaca" font-family="Liberation Sans">288</text>
<text x="302.0" y="75.6" font-size="6.9" letter-spacing="-0.25" fill="#cacaca" font-family="Liberation Sans">360</text>
<text x="347.2" y="75.6" font-size="6.9" letter-spacing="-0.25" fill="#cacaca" font-family="Liberation Sans">432</text>
<text x="392.4" y="75.6" font-size="6.9" letter-spacing="-0.25" fill="#cacaca" font-family="Liberation Sans">504</text>
<text x="437.6" y="75.6" font-size="6.9" letter-spacing="-0.25" fill="#cacaca" font-family="Liberation Sans">576</text>
<text x="482.8" y="75.6" font-size="6.9" letter-spacing="-0.25" fill="#cacaca" font-family="Liberation Sans">648</text>
<text x="528.0" y="75.6" font-size="6.9" letter-spacing="-0.25" fill="#cacaca" font-family="Liberation Sans">720</text>
<text x="573.2" y="75.6" font-size="6.9" letter-spacing="-0.25" fill="#cacaca" font-family="Liberation Sans">792</text>
<text x="618.4" y="75.6" font-size="6.9" letter-spacing="-0.25" fill="#cacaca" font-family="Liberation Sans">864</text>
<text x="663.6" y="75.6" font-size="6.9" letter-spacing="-0.25" fill="#cacaca" font-family="Liberation Sans">936</text>
<text x="708.8" y="75.6" font-size="6.9" letter-spacing="-0.25" fill="#cacaca" font-family="Liberation Sans">1008</text>
<text x="754.0" y="75.6" font-size="6.9" letter-spacing="-0.25" fill="#cacaca" font-family="Liberation Sans">1080</text>
<text x="799.2" y="75.6" font-size="6.9" letter-spacing="-0.25" fill="#cacaca" font-family="Liberation Sans">1152</text>
<text x="844.4" y="75.6" font-size="6.9" letter-spacing="-0.25" fill="#cacaca" font-family="Liberation Sans">1224</text>
<text x="889.6" y="75.6" font-size="6.9" letter-spacing="-0.25" fill="#cacaca" font-family="Liberation Sans">1296</text>
<text x="934.8" y="75.6" font-size="6.9" letter-spacing="-0.25" fill="#cacaca" font-family="Liberation Sans">1368</text>
<text x="980.0" y="75.6" font-size="6.9" letter-spacing="-0.25" fill="#cacaca" font-family="Liberation Sans">1440</text>
</svg>
<svg style="left:48px;top:79px;will-change:transform" width="11" height="516" viewBox="48 79 11 516">
<path d="M48.6 109.5 H59 M48.6 154.7 H59 M48.6 199.9 H59 M48.6 245.1 H59 M48.6 290.3 H59 M48.6 335.5 H59 M48.6 380.7 H59 M48.6 425.9 H59 M48.6 471.1 H59 M48.6 516.3 H59 M48.6 561.5 H59" stroke="#6a6a6a" stroke-width="0.7"/>
<path d="M56.5 86.9 H59 M56.5 94.4 H59 M56.5 102.0 H59 M56.5 117.0 H59 M56.5 124.6 H59 M56.5 132.1 H59 M56.5 139.6 H59 M56.5 147.2 H59 M56.5 162.2 H59 M56.5 169.8 H59 M56.5 177.3 H59 M56.5 184.8 H59 M56.5 192.4 H59 M56.5 207.4 H59 M56.5 215.0 H59 M56.5 222.5 H59 M56.5 230.0 H59 M56.5 237.6 H59 M56.5 252.6 H59 M56.5 260.2 H59 M56.5 267.7 H59 M56.5 275.2 H59 M56.5 282.8 H59 M56.5 297.8 H59 M56.5 305.4 H59 M56.5 312.9 H59 M56.5 320.4 H59 M56.5 328.0 H59 M56.5 343.0 H59 M56.5 350.6 H59 M56.5 358.1 H59 M56.5 365.6 H59 M56.5 373.2 H59 M56.5 388.2 H59 M56.5 395.8 H59 M56.5 403.3 H59 M56.5 410.8 H59 M56.5 418.4 H59 M56.5 433.4 H59 M56.5 441.0 H59 M56.5 448.5 H59 M56.5 456.0 H59 M56.5 463.6 H59 M56.5 478.6 H59 M56.5 486.2 H59 M56.5 493.7 H59 M56.5 501.2 H59 M56.5 508.8 H59 M56.5 523.8 H59 M56.5 531.4 H59 M56.5 538.9 H59 M56.5 546.4 H59 M56.5 554.0 H59 M56.5 569.0 H59 M56.5 576.6 H59 M56.5 584.1 H59 M56.5 591.6 H59" stroke="#707070" stroke-width="0.7"/>
<text x="49.7" y="92.9" font-size="7" fill="#cacaca" font-family="Liberation Sans">8</text>
<text x="49.7" y="99.3" font-size="7" fill="#cacaca" font-family="Liberation Sans">6</text>
<text x="49.7" y="105.7" font-size="7" fill="#cacaca" font-family="Liberation Sans">4</text>
<text x="49.7" y="138.1" font-size="7" fill="#cacaca" font-family="Liberation Sans">9</text>
<text x="49.7" y="144.5" font-size="7" fill="#cacaca" font-family="Liberation Sans">3</text>
<text x="49.7" y="150.9" font-size="7" fill="#cacaca" font-family="Liberation Sans">6</text>
<text x="49.7" y="176.9" font-size="7" fill="#cacaca" font-family="Liberation Sans">1</text>
<text x="49.7" y="183.3" font-size="7" fill="#cacaca" font-family="Liberation Sans">0</text>
<text x="49.7" y="189.7" font-size="7" fill="#cacaca" font-family="Liberation Sans">0</text>
<text x="49.7" y="196.1" font-size="7" fill="#cacaca" font-family="Liberation Sans">8</text>
<text x="49.7" y="222.1" font-size="7" fill="#cacaca" font-family="Liberation Sans">1</text>
<text x="49.7" y="228.5" font-size="7" fill="#cacaca" font-family="Liberation Sans">0</text>
<text x="49.7" y="234.9" font-size="7" fill="#cacaca" font-family="Liberation Sans">8</text>
<text x="49.7" y="241.3" font-size="7" fill="#cacaca" font-family="Liberation Sans">0</text>
<text x="49.7" y="267.3" font-size="7" fill="#cacaca" font-family="Liberation Sans">1</text>
<text x="49.7" y="273.7" font-size="7" fill="#cacaca" font-family="Liberation Sans">1</text>
<text x="49.7" y="280.1" font-size="7" fill="#cacaca" font-family="Liberation Sans">5</text>
<text x="49.7" y="286.5" font-size="7" fill="#cacaca" font-family="Liberation Sans">2</text>
<text x="49.7" y="312.5" font-size="7" fill="#cacaca" font-family="Liberation Sans">1</text>
<text x="49.7" y="318.9" font-size="7" fill="#cacaca" font-family="Liberation Sans">2</text>
<text x="49.7" y="325.3" font-size="7" fill="#cacaca" font-family="Liberation Sans">2</text>
<text x="49.7" y="331.7" font-size="7" fill="#cacaca" font-family="Liberation Sans">4</text>
<text x="49.7" y="357.7" font-size="7" fill="#cacaca" font-family="Liberation Sans">1</text>
<text x="49.7" y="364.1" font-size="7" fill="#cacaca" font-family="Liberation Sans">2</text>
<text x="49.7" y="370.5" font-size="7" fill="#cacaca" font-family="Liberation Sans">9</text>
<text x="49.7" y="376.9" font-size="7" fill="#cacaca" font-family="Liberation Sans">6</text>
<text x="49.7" y="402.9" font-size="7" fill="#cacaca" font-family="Liberation Sans">1</text>
<text x="49.7" y="409.3" font-size="7" fill="#cacaca" font-family="Liberation Sans">3</text>
<text x="49.7" y="415.7" font-size="7" fill="#cacaca" font-family="Liberation Sans">6</text>
<text x="49.7" y="422.1" font-size="7" fill="#cacaca" font-family="Liberation Sans">8</text>
<text x="49.7" y="448.1" font-size="7" fill="#cacaca" font-family="Liberation Sans">1</text>
<text x="49.7" y="454.5" font-size="7" fill="#cacaca" font-family="Liberation Sans">4</text>
<text x="49.7" y="460.9" font-size="7" fill="#cacaca" font-family="Liberation Sans">4</text>
<text x="49.7" y="467.3" font-size="7" fill="#cacaca" font-family="Liberation Sans">0</text>
<text x="49.7" y="493.3" font-size="7" fill="#cacaca" font-family="Liberation Sans">1</text>
<text x="49.7" y="499.7" font-size="7" fill="#cacaca" font-family="Liberation Sans">5</text>
<text x="49.7" y="506.1" font-size="7" fill="#cacaca" font-family="Liberation Sans">1</text>
<text x="49.7" y="512.5" font-size="7" fill="#cacaca" font-family="Liberation Sans">2</text>
<text x="49.7" y="538.5" font-size="7" fill="#cacaca" font-family="Liberation Sans">1</text>
<text x="49.7" y="544.9" font-size="7" fill="#cacaca" font-family="Liberation Sans">5</text>
<text x="49.7" y="551.3" font-size="7" fill="#cacaca" font-family="Liberation Sans">8</text>
<text x="49.7" y="557.7" font-size="7" fill="#cacaca" font-family="Liberation Sans">4</text>
</svg>

<!-- ARTBOARD ART -->
<div class="abs" style="left:74px;top:79px;width:200px;height:8px;overflow:hidden"><div class="t" style="left:0;top:-2.3px;font-size:8.38px;font-weight:bold;color:#c4c4c4">03 - PrimarySketch-1-Detail-1</div></div>
<div class="t" style="left:74.2px;top:579.3px;font-size:8.42px;font-weight:bold;color:#c4c4c4">04 - PrimarySketch-1-Detail-2</div>
<svg style="left:74px;top:90px;will-change:transform" width="385" height="497" viewBox="74 90 385 497">
  <defs>
    <pattern id="wbpat" width="1.4" height="1.4" patternUnits="userSpaceOnUse"><rect width="1.4" height="1.4" fill="#979797"/><rect x="0.2" y="0.2" width="0.7" height="0.7" fill="#e4e4e4"/></pattern>
    <g id="sf">
<path d="M201.6 241.6 C203.3 241.8 208.1 242.2 212.0 242.6 C215.9 243.0 219.5 243.3 225.0 243.8 C230.5 244.3 238.0 245.3 245.0 245.8 C252.0 246.3 259.7 246.8 267.0 246.8 C274.3 246.8 282.0 246.3 289.0 245.8 C296.0 245.3 303.5 244.3 309.0 243.8 C314.5 243.3 318.1 243.0 322.0 242.6 C325.9 242.2 330.7 241.8 332.4 241.6 L329.0 245.6 C327.8 246.1 325.3 247.5 322.0 248.7 C318.7 249.9 314.5 251.4 309.0 252.8 C303.5 254.2 296.0 256.4 289.0 257.4 C282.0 258.4 274.3 259.0 267.0 259.0 C259.7 259.0 252.0 258.4 245.0 257.4 C238.0 256.4 230.5 254.2 225.0 252.8 C219.5 251.4 215.3 249.9 212.0 248.7 C208.7 247.5 206.2 246.1 205.0 245.6 Z" fill="url(#wbpat)" stroke="#111" stroke-width="0.6"/>
<path d="M201.4 241.8 C202.0 242.4 203.2 244.4 205.0 245.6 C206.8 246.8 208.7 247.5 212.0 248.7 C215.3 249.9 219.5 251.4 225.0 252.8 C230.5 254.2 238.0 256.4 245.0 257.4 C252.0 258.4 259.7 259.0 267.0 259.0 C274.3 259.0 282.0 258.4 289.0 257.4 C296.0 256.4 303.5 254.2 309.0 252.8 C314.5 251.4 318.7 249.9 322.0 248.7 C325.3 247.5 327.2 246.8 329.0 245.6 C330.8 244.4 332.0 242.4 332.6 241.8 L337.8 257.4 C336.7 258.0 333.6 259.7 331.0 260.8 C328.4 261.9 325.7 262.9 322.0 264.0 C318.3 265.1 314.5 266.3 309.0 267.6 C303.5 268.9 296.0 270.7 289.0 271.6 C282.0 272.5 274.3 272.9 267.0 272.9 C259.7 272.9 252.0 272.5 245.0 271.6 C238.0 270.7 230.5 268.9 225.0 267.6 C219.5 266.3 215.7 265.1 212.0 264.0 C208.3 262.9 205.6 261.9 203.0 260.8 C200.4 259.7 197.3 258.0 196.2 257.4 Z" fill="url(#wbpat)" stroke="#111" stroke-width="0.6"/>
<path d="M202.8 248.5 C204.0 249.1 206.6 250.5 209.8 251.7 C212.9 252.9 216.7 254.2 221.8 255.6 C226.8 257.0 233.4 258.9 240.0 259.9 C246.6 261.0 254.2 261.9 261.5 262.1 C268.8 262.4 276.4 262.0 283.5 261.3 C290.6 260.5 298.1 258.8 304.0 257.5 C309.9 256.2 314.9 254.6 318.8 253.4 C322.6 252.2 325.8 250.7 327.2 250.2" fill="none" stroke="#6a6a6a" stroke-width="0.35" stroke-dasharray="1 0.8"/>
<path d="M200.6 251.5 C201.8 252.0 204.5 253.6 207.5 254.8 C210.5 255.9 213.9 257.1 218.5 258.4 C223.1 259.7 228.8 261.4 235.0 262.5 C241.2 263.6 248.8 264.9 256.0 265.3 C263.2 265.7 270.8 265.7 278.0 265.1 C285.2 264.6 292.8 263.4 299.0 262.2 C305.2 261.0 311.1 259.4 315.5 258.1 C319.9 256.9 323.8 255.4 325.5 254.8" fill="none" stroke="#6a6a6a" stroke-width="0.35" stroke-dasharray="1 0.8"/>
<path d="M198.4 254.4 C199.5 255.0 202.4 256.7 205.2 257.8 C208.1 258.9 211.1 260.0 215.2 261.2 C219.4 262.4 224.1 263.8 230.0 265.1 C235.9 266.3 243.4 267.8 250.5 268.5 C257.6 269.1 265.2 269.3 272.5 269.0 C279.8 268.8 287.4 267.9 294.0 266.9 C300.6 265.9 307.3 264.1 312.2 262.9 C317.2 261.6 321.8 260.0 323.8 259.4" fill="none" stroke="#6a6a6a" stroke-width="0.35" stroke-dasharray="1 0.8"/>
<path d="M206.5 262.0 Q205.8 268.6 202.6 273.0 M208.1 262.3 q-0.8 4.8 -0.9 6.1 q0.9 0.9 1.1 -1.6 M211.2 263.7 Q209.8 269.7 206.5 273.7 M212.8 264.0 q-0.9 4.4 -1.1 5.5 q0.9 0.9 1.1 -1.6 M214.4 264.7 Q213.4 270.1 210.2 273.7 M216.0 265.0 q-0.9 4.0 -1.0 5.0 q0.9 0.9 1.1 -1.6 M217.8 265.6 Q216.6 274.6 213.1 280.6 M222.7 267.0 Q221.6 276.0 218.3 282.0 M224.3 267.3 q-0.9 5.6 -1.0 7.0 q0.9 0.9 1.1 -1.6 M226.1 267.8 Q225.7 278.0 223.0 284.8 M229.5 268.5 Q229.1 277.5 226.3 283.5 M231.1 268.8 q-0.6 5.6 -0.7 7.0 q0.9 0.9 1.1 -1.6 M232.8 269.2 Q232.8 277.6 230.2 283.2 M234.4 269.5 q-0.5 5.6 -0.5 7.0 q0.9 0.9 1.1 -1.6 M237.7 270.1 Q237.0 281.5 235.7 289.1 M239.3 270.4 q-0.4 5.6 -0.3 7.0 q0.9 0.9 1.1 -1.6 M241.8 271.0 Q242.2 277.6 239.4 282.0 M243.4 271.3 q-0.5 4.8 -0.4 6.1 q0.9 0.9 1.1 -1.6 M245.8 271.6 Q246.2 285.4 243.9 294.6 M247.4 271.9 q-0.4 5.6 -0.2 7.0 q0.9 0.9 1.1 -1.6 M250.0 271.9 Q249.9 285.7 248.8 294.9 M251.6 272.2 q-0.2 5.6 -0.0 7.0 q0.9 0.9 1.1 -1.6 M254.7 272.2 Q253.9 281.8 254.0 288.2 M259.0 272.4 Q258.8 291.6 259.2 304.4 M262.9 272.7 Q262.4 286.5 262.0 295.7 M266.8 272.9 Q266.4 292.1 266.6 304.9 M268.4 273.2 q-0.0 5.6 0.2 7.0 q0.9 0.9 1.1 -1.6 M270.8 272.7 Q271.2 287.7 272.0 297.7 M272.4 273.0 q0.3 5.6 0.7 7.0 q0.9 0.9 1.1 -1.6 M274.4 272.5 Q273.7 283.3 275.3 290.5 M277.9 272.3 Q278.2 289.1 278.8 300.3 M279.5 272.6 q0.2 5.6 0.6 7.0 q0.9 0.9 1.1 -1.6 M281.3 272.1 Q281.9 279.9 282.8 285.1 M282.9 272.4 q0.3 5.6 0.7 7.0 q0.9 0.9 1.1 -1.6 M286.1 271.8 Q286.3 286.8 287.4 296.8 M287.7 272.1 q0.3 5.6 0.7 7.0 q0.9 0.9 1.1 -1.6 M289.6 271.5 Q290.0 279.9 290.6 285.5 M291.2 271.8 q0.2 5.6 0.6 7.0 q0.9 0.9 1.1 -1.6 M293.9 270.6 Q293.5 285.6 296.2 295.6 M295.5 270.9 q0.5 5.6 1.0 7.0 q0.9 0.9 1.1 -1.6 M297.7 269.9 Q298.1 279.5 300.4 285.9 M299.3 270.2 q0.5 5.6 1.1 7.0 q0.9 0.9 1.1 -1.6 M301.8 269.0 Q301.6 281.0 304.2 289.0 M306.4 268.1 Q306.0 280.1 308.8 288.1 M310.5 267.2 Q311.6 274.4 314.7 279.2 M312.1 267.5 q0.8 5.3 1.6 6.6 q0.9 0.9 1.1 -1.6 M314.9 266.0 Q315.1 272.0 319.0 276.0 M316.5 266.3 q0.8 4.4 1.5 5.5 q0.9 0.9 1.1 -1.6 M318.4 265.0 Q319.4 273.4 322.5 279.0 M320.0 265.3 q0.8 5.6 1.5 7.0 q0.9 0.9 1.1 -1.6 M322.0 264.0 Q323.2 272.4 326.9 278.0 M325.6 262.7 Q326.6 270.5 330.2 275.7" fill="none" stroke="#0e0e0e" style="stroke-width:var(--gw,0.62px)"/>
<path d="M201.8 241.9 C201.4 243.1 200.3 246.7 199.6 249.0 C198.9 251.3 198.7 253.5 197.5 255.8 C196.3 258.1 194.2 260.7 192.5 263.0 C190.8 265.3 189.9 266.2 187.5 269.7 C185.1 273.2 181.1 279.2 178.0 284.0 C174.9 288.8 171.4 293.8 168.7 298.5 C166.0 303.2 164.0 307.6 161.8 312.0 C159.7 316.4 157.9 320.9 155.8 325.2 C153.8 329.5 151.7 333.9 149.5 338.0 C147.3 342.1 144.0 348.0 142.9 350.0" fill="none" stroke="#111" stroke-width="0.55"/>
<path d="M199.2 258.8 C198.0 260.7 194.5 266.0 192.0 270.0 C189.5 274.0 187.2 277.8 184.0 283.0 C180.8 288.2 176.2 295.3 173.0 301.0 C169.8 306.7 167.2 312.2 165.0 317.0 C162.8 321.8 161.4 326.0 159.5 330.0 C157.6 334.0 154.5 339.2 153.5 341.0" fill="none" stroke="#111" stroke-width="0.45"/>
<path d="M152.2 340.6 C151.2 341.6 148.1 344.3 146.5 346.5 C144.9 348.7 143.2 351.4 142.6 353.8 C142.0 356.2 142.6 358.7 143.0 361.0 C143.4 363.3 143.8 365.2 144.9 367.7 C146.0 370.2 147.7 373.4 149.5 376.0 C151.3 378.6 153.2 380.9 155.8 383.6 C158.4 386.3 161.7 389.4 165.0 392.0 C168.3 394.6 171.8 397.0 175.6 399.4 C179.4 401.8 183.7 404.3 188.0 406.6 C192.3 408.9 196.9 411.2 201.4 413.3 C205.9 415.4 210.4 417.4 215.0 419.4 C219.6 421.4 225.0 423.6 229.2 425.2 C233.4 426.8 236.7 428.0 240.0 429.2 C243.3 430.4 246.6 431.5 249.0 432.2 C251.4 432.9 252.9 433.3 254.5 433.4 C256.1 433.5 257.5 433.2 258.6 432.6 C259.7 432.0 260.7 430.8 261.0 429.6 C261.3 428.4 260.8 426.6 260.6 425.6 C260.4 424.6 259.8 423.9 259.6 423.6 L259.6 423.6 C258.8 422.9 257.1 420.8 255.0 419.3 C252.9 417.8 250.0 416.3 247.0 414.8 C244.0 413.3 241.1 412.1 237.1 410.4 C233.1 408.6 227.6 406.3 223.0 404.3 C218.4 402.3 214.1 400.6 209.4 398.5 C204.7 396.4 199.6 394.3 195.0 392.0 C190.4 389.7 185.3 387.0 181.6 384.6 C177.9 382.2 175.7 380.1 173.0 377.6 C170.3 375.1 167.9 372.5 165.7 369.7 C163.5 366.9 161.4 363.9 160.0 361.0 C158.6 358.1 157.6 354.7 157.0 352.0 C156.4 349.3 156.5 346.2 156.4 345.0 Z" fill="#cbcbcd" stroke="#000" stroke-width="4.1" stroke-linejoin="round"/>
<path d="M206.3 242.4 C206.2 243.0 205.9 244.4 205.5 246.0 C205.1 247.6 204.3 250.2 203.7 252.0 C203.1 253.8 202.4 255.6 201.7 257.0 C201.0 258.4 200.5 258.6 199.4 260.4 C198.3 262.1 196.7 265.0 195.0 267.5 C193.3 270.0 191.7 272.4 189.5 275.6 C187.3 278.9 184.3 283.4 182.0 287.0 C179.7 290.6 177.8 293.8 175.6 297.5 C173.4 301.2 171.0 305.4 169.0 309.0 C167.0 312.6 165.3 316.0 163.7 319.3 C162.1 322.6 160.6 326.0 159.6 329.0 C158.6 332.0 157.9 334.8 157.4 337.5 C156.9 340.2 156.6 343.8 156.4 345.0" fill="none" stroke="#000" stroke-width="4.2" stroke-linecap="butt"/>
<path d="M332.2 241.9 C332.6 243.1 333.7 246.7 334.4 249.0 C335.1 251.3 335.3 253.5 336.5 255.8 C337.7 258.1 339.8 260.7 341.5 263.0 C343.2 265.3 344.1 266.2 346.5 269.7 C348.9 273.2 352.9 279.2 356.0 284.0 C359.1 288.8 362.6 293.8 365.3 298.5 C368.0 303.2 370.1 307.6 372.2 312.0 C374.3 316.4 376.1 320.9 378.2 325.2 C380.2 329.5 382.4 333.9 384.5 338.0 C386.6 342.1 390.0 348.0 391.1 350.0" fill="none" stroke="#111" stroke-width="0.55"/>
<path d="M334.8 258.8 C336.0 260.7 339.5 266.0 342.0 270.0 C344.5 274.0 346.8 277.8 350.0 283.0 C353.2 288.2 357.8 295.3 361.0 301.0 C364.2 306.7 366.8 312.2 369.0 317.0 C371.2 321.8 372.6 326.0 374.5 330.0 C376.4 334.0 379.5 339.2 380.5 341.0" fill="none" stroke="#111" stroke-width="0.45"/>
<path d="M381.8 340.6 C382.8 341.6 385.9 344.3 387.5 346.5 C389.1 348.7 390.8 351.4 391.4 353.8 C392.0 356.2 391.4 358.7 391.0 361.0 C390.6 363.3 390.2 365.2 389.1 367.7 C388.0 370.2 386.3 373.4 384.5 376.0 C382.7 378.6 380.8 380.9 378.2 383.6 C375.6 386.3 372.3 389.4 369.0 392.0 C365.7 394.6 362.2 397.0 358.4 399.4 C354.6 401.8 350.3 404.3 346.0 406.6 C341.7 408.9 337.1 411.2 332.6 413.3 C328.1 415.4 323.6 417.4 319.0 419.4 C314.4 421.4 309.0 423.6 304.8 425.2 C300.6 426.8 297.3 428.0 294.0 429.2 C290.7 430.4 287.4 431.5 285.0 432.2 C282.6 432.9 281.1 433.3 279.5 433.4 C277.9 433.5 276.5 433.2 275.4 432.6 C274.3 432.0 273.3 430.8 273.0 429.6 C272.7 428.4 273.2 426.6 273.4 425.6 C273.6 424.6 274.2 423.9 274.4 423.6 L274.4 423.6 C275.2 422.9 276.9 420.8 279.0 419.3 C281.1 417.8 284.0 416.3 287.0 414.8 C290.0 413.3 292.9 412.1 296.9 410.4 C300.9 408.6 306.4 406.3 311.0 404.3 C315.6 402.3 319.9 400.6 324.6 398.5 C329.3 396.4 334.4 394.3 339.0 392.0 C343.6 389.7 348.7 387.0 352.4 384.6 C356.1 382.2 358.4 380.1 361.0 377.6 C363.6 375.1 366.1 372.5 368.3 369.7 C370.5 366.9 372.6 363.9 374.0 361.0 C375.4 358.1 376.4 354.7 377.0 352.0 C377.6 349.3 377.5 346.2 377.6 345.0 Z" fill="#cbcbcd" stroke="#000" stroke-width="4.1" stroke-linejoin="round"/>
<path d="M327.7 242.4 C327.8 243.0 328.1 244.4 328.5 246.0 C328.9 247.6 329.7 250.2 330.3 252.0 C330.9 253.8 331.6 255.6 332.3 257.0 C333.0 258.4 333.5 258.6 334.6 260.4 C335.7 262.1 337.4 265.0 339.0 267.5 C340.6 270.0 342.3 272.4 344.5 275.6 C346.7 278.9 349.7 283.4 352.0 287.0 C354.3 290.6 356.2 293.8 358.4 297.5 C360.6 301.2 363.0 305.4 365.0 309.0 C367.0 312.6 368.7 316.0 370.3 319.3 C371.9 322.6 373.3 326.0 374.4 329.0 C375.4 332.0 376.1 334.8 376.6 337.5 C377.1 340.2 377.4 343.8 377.6 345.0" fill="none" stroke="#000" stroke-width="4.2" stroke-linecap="butt"/>
<path d="M266.6 272.9 V424.6 M266.6 424.6 L263.4 430.6 M266.6 424.6 L270.2 430.6" fill="none" stroke="#000" stroke-width="0.9"/>
<path d="M257.4 417.6 Q263 415.6 267.0 411.6 Q271 415.6 276.6 417.6" fill="none" stroke="#111" stroke-width="0.5"/>
<path d="M256.6 408.6 L270 406.4 L259 410.8 L268 409 L261.6 412.4 L275.8 405.6" fill="none" stroke="#444" stroke-width="0.4"/>
    </g>
    <g id="sfl">
      <g stroke="#ee3535" stroke-width="0.9" fill="none">
        <path d="M198.8 232.7 H334.4"/>
        <path d="M335 237.9 L340.3 253.7"/>
        <path d="M167.7 298.9 H362.5"/>
        <path d="M394.7 359.6 C392 384 370 404 344.3 418.3 C322 430 296 436.4 273.8 439.1"/>
      </g>
      <g fill="#e81c1c"><circle cx="198.8" cy="232.7" r="1.4"/><circle cx="334.4" cy="232.7" r="1.4"/><circle cx="335" cy="237.9" r="1.4"/><circle cx="340.3" cy="253.7" r="1.4"/><circle cx="167.7" cy="298.9" r="1.4"/><circle cx="362.5" cy="298.9" r="1.4"/><circle cx="394.7" cy="359.6" r="1.4"/><circle cx="273.8" cy="439.1" r="1.4"/></g>
      <g font-family="Liberation Sans" font-size="16.6" fill="#141414">
        <text x="261.6" y="248.2" textLength="10" lengthAdjust="spacingAndGlyphs">A</text>
        <text x="341" y="251.2" textLength="8.4" lengthAdjust="spacingAndGlyphs">B</text>
        <text x="259.8" y="314.8" textLength="10" lengthAdjust="spacingAndGlyphs">C</text>
        <text x="342" y="431.2" textLength="11" lengthAdjust="spacingAndGlyphs">D</text>
      </g>
    </g>
  </defs>
  <use href="#sf"/>
  <use href="#sfl"/>
</svg>

<!-- BOTTOM STRIPS / STATUS / DOCK -->
<div class="abs" style="left:459.4px;top:79px;width:5.4px;height:516px;background:#5a5a5a"></div>
<div class="abs" style="left:464.7px;top:579px;width:384.2px;height:7.8px;background:#fff"></div>
<div class="abs" style="left:464.7px;top:592.6px;width:384.2px;height:2.4px;background:#fff"></div>
<div class="t" style="left:465.2px;top:579.7px;font-size:8.42px;font-weight:bold;color:#c6c6c6">07 - PrimarySketch-2-Detail-2</div>
<div class="abs" style="left:990.4px;top:79px;width:10.8px;height:516px;background:#585858"></div>
<svg style="left:993px;top:586.8px;opacity:0.7" width="6" height="3.8"><use href="#chev"/></svg>
<!-- status bar -->
<div class="abs" style="left:48px;top:595px;width:953px;height:10px;background:#4a4a4a"></div>
<div class="abs" style="left:48px;top:595px;width:366px;height:10px;background:#454545"></div>
<div class="abs" style="left:50.6px;top:595.6px;width:35.4px;height:10px;background:#3a3a3a"></div>
<div class="abs" style="left:86.6px;top:595.6px;width:10.4px;height:10px;background:#4c4c4c"></div>
<div class="abs" style="left:102px;top:595.6px;width:35.6px;height:10px;background:#3a3a3a"></div>
<div class="abs" style="left:138.2px;top:595.6px;width:10.4px;height:10px;background:#4c4c4c"></div>
<div class="abs" style="left:178.6px;top:595.6px;width:28.4px;height:10px;background:#3a3a3a"></div>
<div class="abs" style="left:207.6px;top:595.6px;width:10.4px;height:10px;background:#4c4c4c"></div>
<div class="abs" style="left:249px;top:595.6px;width:142px;height:10px;background:#4a4a4a"></div>
<div class="t" style="left:53.2px;top:598.2px;font-size:6.9px;color:#e8e8e8">50%</div>
<div class="t" style="left:104.6px;top:598.2px;font-size:6.9px;color:#e8e8e8">0°</div>
<div class="t" style="left:181.6px;top:598.2px;font-size:6.9px;color:#e8e8e8">1</div>
<div class="t" style="left:304.4px;top:598.4px;font-size:7.5px;color:#ececec">Selection</div>
<svg style="left:48px;top:595px" width="400" height="10" viewBox="48 595 400 10">
  <g fill="none" stroke="#d8d8d8" stroke-width="1" stroke-linecap="round" stroke-linejoin="round">
    <path d="M89.2 600 L91.8 602.6 L94.4 600"/><path d="M140.8 600 L143.4 602.6 L146 600"/><path d="M210.2 600 L212.8 602.6 L215.4 600"/>
    <path d="M410 598.4 L408 600.8 L410 603.2" stroke="#8a8a8a" stroke-width="0.8"/>
  </g>
  <g fill="#6c6c6c"><rect x="156.8" y="598" width="1" height="5.4"/><path d="M161.6 598 V603.4 L158.2 600.7 Z"/><path d="M173 598 V603.4 L169.4 600.7 Z"/></g>
  <g fill="#d4d4d4"><path d="M226.8 598 V603.4 L230.4 600.7 Z"/><path d="M237.4 598 V603.4 L240.8 600.7 Z"/><rect x="241.2" y="598" width="1" height="5.4"/><path d="M396.6 598 V603.4 L400 600.7 Z"/></g>
</svg>
<div class="abs" style="left:700.6px;top:596.4px;width:19.4px;height:9px;border-radius:4.5px;background:#6c6c6c"></div>
<svg style="left:982.6px;top:597.6px" width="4.4" height="7" viewBox="0 0 5 8"><path d="M1 1 L4 4 L1 7" fill="none" stroke="#9a9a9a" stroke-width="1" stroke-linecap="round" stroke-linejoin="round"/></svg>
<div class="abs" style="left:990.4px;top:595px;width:10.8px;height:10px;background:#535353"></div>
<!-- dock -->
<div class="abs" style="left:1001.2px;top:47px;width:3px;height:558px;background:#444"></div>
<div class="abs" id="dock"></div>
<div class="abs" id="dockhead"></div>
<svg style="left:1004px;top:47px" width="20" height="210" viewBox="1004 47 20 210">
  <path d="M1021.8 49 L1020.4 50.6 L1021.8 52.2" fill="none" stroke="#c8c8c8" stroke-width="0.8"/>
  <rect x="1010" y="58" width="14" height="2.4" fill="#474747"/>
  <path d="M1010 58 V60.4 M1011.8 58 V60.4 M1013.6 58 V60.4 M1015.4 58 V60.4 M1017.2 58 V60.4 M1019 58 V60.4 M1020.8 58 V60.4 M1022.6 58 V60.4" stroke="#535353" stroke-width="0.6"/>
  <!-- layers -->
  <path d="M1017.2 66 L1023 69.4 L1017.2 72.8 L1011.4 69.4 Z" fill="#dedede"/>
  <path d="M1011.6 72.6 L1017.2 76 L1022.8 72.6" fill="none" stroke="#dedede" stroke-width="1.4"/>
  <!-- appearance -->
  <circle cx="1017.4" cy="91.6" r="4.2" fill="#dcdcdc"/>
  <circle cx="1017.4" cy="91.6" r="5.9" fill="none" stroke="#cfcfcf" stroke-width="0.8" stroke-dasharray="1 1.1"/>
  <!-- align -->
  <rect x="1012.2" y="105" width="0.9" height="12.6" fill="#dcdcdc"/>
  <rect x="1014" y="107" width="5" height="3.8" fill="#d0d0d0"/><rect x="1014" y="112.6" width="8.6" height="3.8" fill="#d0d0d0"/>
  <!-- pathfinder -->
  <rect x="1012" y="125.8" width="6.4" height="6.2" fill="#bdbdbd"/><rect x="1016.2" y="130" width="6.6" height="6.4" fill="#d8d8d8"/><rect x="1016.2" y="130" width="2.2" height="2" fill="#8a8a8a"/>
  <!-- stroke lines -->
  <rect x="1011" y="146" width="12.6" height="0.8" fill="#d4d4d4"/><rect x="1011" y="149.2" width="12.6" height="1.5" fill="#d4d4d4"/><rect x="1011" y="153" width="12.6" height="2" fill="#d4d4d4"/>
  <!-- swatches -->
  <rect x="1011.2" y="166.8" width="12" height="7.8" rx="0.6" fill="#cfcfcf"/>
  <g fill="#5a5a5a"><rect x="1012.4" y="168" width="2.8" height="2.2"/><rect x="1019.4" y="168" width="2.8" height="2.2"/><rect x="1012.4" y="171.4" width="2.8" height="2.2"/><rect x="1015.9" y="171.4" width="2.8" height="2.2"/><rect x="1019.4" y="171.4" width="2.8" height="2.2"/></g>
  <rect x="1004" y="175.8" width="20" height="0.9" fill="#454545"/>
  <rect x="1010" y="185.4" width="14" height="2.2" fill="#474747"/>
  <path d="M1011.8 185.4 V187.6 M1013.6 185.4 V187.6 M1015.4 185.4 V187.6 M1017.2 185.4 V187.6 M1019 185.4 V187.6 M1020.8 185.4 V187.6 M1022.6 185.4 V187.6" stroke="#535353" stroke-width="0.6"/>
  <!-- brushes -->
  <path d="M1014.4 198.6 H1021 L1020.4 205.2 H1015 Z" fill="#d8d8d8"/>
  <path d="M1015.6 198.4 L1013.4 193.4 M1017.6 198.4 V191.6 M1019.6 198.4 L1022 194.2" stroke="#d8d8d8" stroke-width="1.1"/>
  <path d="M1012.4 192 L1014.4 192.2 L1014 195.2 Z M1016.8 190.8 H1018.4 L1017.6 193.6 Z M1021.2 192.8 L1023.2 194 L1021.6 196 Z" fill="#d8d8d8"/>
  <!-- symbols -->
  <rect x="1015" y="212.4" width="8.6" height="8.6" fill="#5e5e5e" stroke="#d4d4d4" stroke-width="0.9"/>
  <rect x="1011.4" y="218.2" width="4.8" height="4.8" fill="#535353" stroke="#d4d4d4" stroke-width="0.8"/>
  <circle cx="1016" cy="221.8" r="2" fill="#535353" stroke="#d4d4d4" stroke-width="0.7"/>
  <!-- club -->
  <circle cx="1017.6" cy="235" r="2.9" fill="#d8d8d8"/><circle cx="1014.6" cy="238.6" r="2.9" fill="#d8d8d8"/><circle cx="1020.6" cy="238.6" r="2.9" fill="#d8d8d8"/>
  <path d="M1017.6 237 L1019.4 243.6 H1015.8 Z" fill="#d8d8d8"/>
  <rect x="1004" y="248.8" width="20" height="0.9" fill="#454545"/>
</svg>

<!-- PANEL -->
<div class="abs" id="panel">
  <div class="abs" id="ptop"></div>
  <div class="abs" id="ptabrow"></div>
  <div class="abs" id="ptab"></div>
  <div class="abs" id="pline"></div>
  <svg style="left:3.4px;top:4px" width="4.4" height="4.4" viewBox="0 0 5 5"><path d="M0.6 0.6 L4.4 4.4 M4.4 0.6 L0.6 4.4" stroke="#cfcfcf" stroke-width="0.9"/></svg>
  <svg style="left:524.4px;top:3px" width="6" height="4.4" viewBox="0 0 6 4.4"><path d="M2.2 0.5 L0.7 2.2 L2.2 3.9 M5 0.5 L3.5 2.2 L5 3.9" fill="none" stroke="#bdbdbd" stroke-width="0.7"/></svg>
  <div class="t" style="left:6.2px;top:15.6px;font-size:7.6px;font-weight:bold;color:#f2f2f2">Tech Pack Wizard V1.0.8</div>
  <!-- toggle row -->
  <div class="t" style="left:5.6px;top:42.6px;font-size:10.2px;color:#767676">Flats</div>
  <div class="abs" style="left:33px;top:39.2px;width:33.6px;height:16.8px;border-radius:5.5px;background:linear-gradient(90deg,#606062,#4c4c4e);border:1px solid #333"></div>
  <div class="abs" style="left:50.6px;top:39.2px;width:16px;height:16.8px;border-radius:5.5px;background:linear-gradient(135deg,#6c6c6e,#505052);border:1px solid #333"></div>
  <div class="t" style="left:72.2px;top:42.6px;font-size:10.4px;color:#767676">Tech Pack</div>
  <div class="btn" style="left:126.4px;width:67px">Preview PDF</div>
  <div class="btn" style="left:199.4px;width:63.4px">Export Excel</div>
  <div class="btn" style="left:433.2px;width:40.4px">Reload</div>
  <div class="btn" style="left:479.4px;width:49.6px">Sign Out</div>
  <!-- nav tabs -->
  <div class="abs" id="ntabs">
    <div class="nt" style="left:0;width:60.6px">Tech Pack</div>
    <div class="nt" style="left:60.6px;width:69.8px;letter-spacing:0.28px">Style Cover</div>
    <div class="nt" style="left:130.4px;width:39.2px;letter-spacing:-0.2px">1st Fit</div>
    <div class="nt" style="left:169.6px;width:73.6px">Fit Sheet 1_1</div>
    <div class="nt" style="left:243.2px;width:80.6px;background:#383838">Graded Specs</div>
    <div class="nt" style="left:323.8px;width:113.6px">Labels and Packaging</div>
    <div class="nt" style="left:437.4px;width:49.8px">Callouts</div>
    <div class="nt" style="left:487.2px;width:60px;border-right:none;letter-spacing:0.3px">Colorwa</div>
  </div>
  <div class="abs" id="pcontent">
    <div class="abs" style="left:13.2px;top:3.6px;width:25.2px;height:25.2px;border-radius:50%;background:#ffc9c5"></div>
    <div class="t" style="left:11.9px;top:9.8px;font-size:12.3px;font-weight:bold;color:#ffd9fb;letter-spacing:-0.3px;text-shadow:-0.5px 1.1px 0 #ff3d4f,0.3px 1.2px 0 #ff3d4f,-0.9px 0.5px 0 #ff5a68;-webkit-text-stroke:0.9px #ffd9fb">TPW</div>
    <div class="t" style="left:229px;top:9.7px;font-size:7.7px;letter-spacing:0.12px;color:#1c1c1c">Graded Specs</div>
    <div class="abs" style="left:208.3px;top:21px;width:95.4px;height:1px;background:#2a2a2a"></div>
    <div class="t" style="left:473px;top:12.3px;font-size:7.7px;letter-spacing:0.13px;color:#1c1c1c">Runner shorts</div>
    <div class="abs" style="left:11.2px;top:37.3px;width:512.5999999999999px;height:407.3px;border:1px solid #2b2b2b;border-top:1.4px solid #8a8a8a;border-bottom:none"></div>
    <div class="abs" style="left:11.2px;top:54.8px;width:512.5999999999999px;height:1px;background:#2b2b2b"></div>
    <div class="abs" style="left:266.4px;top:68.9px;width:257.4px;height:1px;background:#2b2b2b"></div>
    <div class="abs" style="left:11.2px;top:83.7px;width:512.5999999999999px;height:1px;background:#2b2b2b"></div>
    <div class="abs" style="left:266.3px;top:37.8px;width:1px;height:45.89999999999998px;background:#2b2b2b"></div>
    <div class="t" style="left:15px;top:43.8px;font-size:7.7px;letter-spacing:0.31px;color:#1c1c1c">Company Name: KK &amp; Co</div>
    <div class="t" style="left:15px;top:61.2px;font-size:7.7px;letter-spacing:0.33px;color:#1c1c1c">Description: Cotton twill runner shorts</div>
    <div class="t" style="left:270.2px;top:43.8px;font-size:7.7px;letter-spacing:0.16px;color:#1c1c1c">Style Number: ST1234</div>
    <div class="t" style="left:270.2px;top:58.0px;font-size:7.6px;letter-spacing:0.02px;color:#1c1c1c">Season: SS27</div>
    <div class="t" style="left:270.2px;top:72.3px;font-size:7.7px;letter-spacing:0.11px;color:#1c1c1c">Supplier: Texfash Ltd.</div>
    <!--THUMBS-START--><svg style="left:0;top:132px;filter:blur(0.25px)" width="535" height="120" viewBox="0 132 535 120">
  <defs><g id="sbk">
<path d="M195.5 241.5 Q267.0 244.5 333.4 241.5 L335.2 257.6 Q267.0 260.6 193.7 257.6 Z" fill="url(#wbpat)" stroke="#333" stroke-width="0.6"/>
<path d="M196.7 258.4 q-0.4 8.4 -1.9 14.0 M199.9 258.4 q-0.4 10.8 -1.8 18.0 M203.0 258.4 q-0.3 4.8 -1.3 8.0 M206.8 258.4 q-0.4 8.4 -2.1 14.0 M210.9 258.4 q-0.3 10.8 -1.7 18.0 M215.3 258.4 q-0.3 8.4 -1.3 14.0 M219.7 258.4 q-0.2 14.4 -1.1 24.0 M223.8 258.4 q-0.3 6.0 -1.6 10.0 M228.3 258.4 q-0.3 4.8 -1.3 8.0 M231.4 258.4 q-0.2 9.6 -1.1 16.0 M235.5 258.4 q-0.1 14.4 -0.6 24.0 M240.0 258.4 q-0.1 14.4 -0.5 24.0 M243.9 258.4 q-0.0 7.2 -0.2 12.0 M247.1 258.4 q-0.1 7.2 -0.6 12.0 M250.5 258.4 q-0.0 14.4 -0.1 24.0 M254.8 258.4 q-0.1 14.4 -0.3 24.0 M258.5 258.4 q-0.0 12.0 -0.2 20.0 M262.1 258.4 q0.1 8.4 0.3 14.0 M266.2 258.4 q0.1 4.8 0.4 8.0 M270.8 258.4 q0.1 7.2 0.3 12.0 M274.3 258.4 q0.1 6.0 0.5 10.0 M277.6 258.4 q0.0 9.6 0.0 16.0 M280.7 258.4 q-0.0 10.8 -0.1 18.0 M285.0 258.4 q0.2 14.4 1.0 24.0 M288.1 258.4 q0.2 14.4 0.9 24.0 M292.5 258.4 q0.2 4.8 0.9 8.0 M296.7 258.4 q0.2 14.4 1.1 24.0 M300.2 258.4 q0.2 9.6 1.0 16.0 M304.8 258.4 q0.1 9.6 0.5 16.0 M308.0 258.4 q0.3 4.8 1.7 8.0 M312.5 258.4 q0.3 9.6 1.4 16.0 M315.8 258.4 q0.4 4.8 2.0 8.0 M319.3 258.4 q0.4 12.0 2.0 20.0 M323.8 258.4 q0.3 14.4 1.5 24.0 M328.1 258.4 q0.4 14.4 1.9 24.0 M332.1 258.4 q0.4 6.0 2.0 10.0" fill="none" stroke="#333" stroke-width="1.1"/>
<path d="M194.2 257.6 C192.8 259.8 189.4 265.1 185.6 270.7 C181.7 276.3 175.9 284.4 171.1 291.4 C166.2 298.3 161.0 305.3 156.6 312.3 C152.1 319.2 147.8 326.6 144.4 333.2 C140.9 339.8 137.1 348.7 135.7 351.8" fill="none" stroke="#222" stroke-width="0.7"/>
<path d="M135.7 350.3 C136.5 352.4 138.2 358.8 140.3 362.9 C142.4 367.0 144.0 369.7 148.4 374.7 C152.8 379.8 159.7 387.6 166.7 393.1 C173.7 398.7 182.9 403.6 190.4 408.0 C197.9 412.4 204.5 415.8 211.5 419.3 C218.6 422.8 226.7 426.5 232.6 428.9 C238.6 431.3 243.0 432.9 247.2 433.9 C251.4 435.0 255.2 435.6 257.8 435.5 C260.5 435.3 261.8 434.1 262.9 432.9 C264.0 431.8 264.2 429.2 264.5 428.4" fill="none" stroke="#000" stroke-width="4.8" stroke-linecap="round"/>
<path d="M339.8 257.6 C341.2 259.8 344.6 265.1 348.4 270.7 C352.3 276.3 358.1 284.4 362.9 291.4 C367.8 298.3 373.0 305.3 377.4 312.3 C381.9 319.2 386.2 326.6 389.6 333.2 C393.1 339.8 396.9 348.7 398.3 351.8" fill="none" stroke="#222" stroke-width="0.7"/>
<path d="M398.3 350.3 C397.5 352.4 395.8 358.8 393.7 362.9 C391.6 367.0 390.0 369.7 385.6 374.7 C381.2 379.8 374.3 387.6 367.3 393.1 C360.3 398.7 351.1 403.6 343.6 408.0 C336.1 412.4 329.5 415.8 322.5 419.3 C315.4 422.8 307.3 426.5 301.4 428.9 C295.4 431.3 291.0 432.9 286.8 433.9 C282.6 435.0 278.8 435.6 276.2 435.5 C273.5 435.3 272.2 434.1 271.1 432.9 C270.0 431.8 269.8 429.2 269.5 428.4" fill="none" stroke="#000" stroke-width="4.8" stroke-linecap="round"/>
<path d="M243.1 420.6 Q267.0 430.4 290.9 420.6" fill="none" stroke="#333" stroke-width="0.6"/>
<path d="M266.0 258.1 V428.4" fill="none" stroke="#333" stroke-width="0.7"/>
  </g></defs>
  <g transform="translate(-4.83 59.32) scale(0.393 0.397)" style="--gw:1.25px"><use href="#sf"/><use href="#sfl" opacity="0.9"/></g>
  <g transform="translate(162.67 59.32) scale(0.393 0.397)" style="--gw:1.25px"><use href="#sf"/><path d="M323.7 351.8 L330.9 361.4" stroke="#ee3535" stroke-width="1" stroke-dasharray="2 1.4"/><circle cx="323.7" cy="351.8" r="1.4" fill="#e81c1c"/><circle cx="330.9" cy="361.4" r="1.4" fill="#e81c1c"/><text x="330.6" y="381.0" font-family="Liberation Sans" font-size="16.6" fill="#222">F</text></g>
  <g transform="translate(330.47 59.32) scale(0.393 0.397)"><use href="#sbk"/><path d="M268.3 262.2 L268.3 425.9" stroke="#ee3535" stroke-width="0.9"/><circle cx="268.3" cy="262.2" r="1.4" fill="#e81c1c"/><circle cx="268.3" cy="425.9" r="1.4" fill="#e81c1c"/><text x="269.0" y="350.8" font-family="Liberation Sans" font-size="16" fill="#222">G</text></g>
</svg><!--THUMBS-END-->
    <div class="abs" style="left:11.4px;top:303.6px;width:511.4px;height:108.6px;background:#fff"></div>
    <div class="abs" style="left:11.4px;top:303.6px;width:511.4px;height:13.4px;background:#d3d3d8"></div>
    <div class="abs" style="left:11.4px;top:333.4px;width:511.4px;height:15.5px;background:#f3f3f5"></div>
    <div class="abs" style="left:11.4px;top:364.6px;width:511.4px;height:15.8px;background:#f3f3f5"></div>
    <div class="abs" style="left:11.4px;top:396.2px;width:511.4px;height:16.0px;background:#f3f3f5"></div>
    <div class="abs" style="left:295.4px;top:303.6px;width:51.9px;height:108.6px;background:#fde047"></div>
    <div class="abs" style="left:11.4px;top:303.1px;width:511.9px;height:1.1px;background:#2a2a2a"></div>
    <div class="abs" style="left:11.4px;top:316.5px;width:511.9px;height:1.1px;background:#2a2a2a"></div>
    <div class="abs" style="left:11.4px;top:332.9px;width:511.9px;height:1.1px;background:#2a2a2a"></div>
    <div class="abs" style="left:11.4px;top:348.4px;width:511.9px;height:1.1px;background:#2a2a2a"></div>
    <div class="abs" style="left:11.4px;top:364.1px;width:511.9px;height:1.1px;background:#2a2a2a"></div>
    <div class="abs" style="left:11.4px;top:379.9px;width:511.9px;height:1.1px;background:#2a2a2a"></div>
    <div class="abs" style="left:11.4px;top:395.7px;width:511.9px;height:1.1px;background:#2a2a2a"></div>
    <div class="abs" style="left:11.4px;top:411.7px;width:511.9px;height:1.1px;background:#2a2a2a"></div>
    <div class="abs" style="left:10.5px;top:303.1px;width:1.8px;height:109.6px;background:#111"></div>
    <div class="abs" style="left:72.0px;top:303.1px;width:1.1px;height:109.6px;background:#2a2a2a"></div>
    <div class="abs" style="left:132.4px;top:303.1px;width:1.1px;height:109.6px;background:#2a2a2a"></div>
    <div class="abs" style="left:192.3px;top:303.1px;width:1.1px;height:109.6px;background:#2a2a2a"></div>
    <div class="abs" style="left:243.9px;top:303.1px;width:1.1px;height:109.6px;background:#2a2a2a"></div>
    <div class="abs" style="left:294.9px;top:303.1px;width:1.1px;height:109.6px;background:#2a2a2a"></div>
    <div class="abs" style="left:346.8px;top:303.1px;width:1.1px;height:109.6px;background:#2a2a2a"></div>
    <div class="abs" style="left:397.9px;top:303.1px;width:1.1px;height:109.6px;background:#2a2a2a"></div>
    <div class="abs" style="left:449.9px;top:303.1px;width:1.1px;height:109.6px;background:#2a2a2a"></div>
    <div class="abs" style="left:502.9px;top:303.1px;width:1.1px;height:109.6px;background:#2a2a2a"></div>
    <div class="abs" style="left:522.3px;top:303.1px;width:1.1px;height:109.6px;background:#2a2a2a"></div>
    <div class="t" style="left:11.4px;width:61.1px;text-align:center;top:307.8px;font-size:5.0px;font-weight:bold;color:#1a1a1a">CODE</div>
    <div class="t" style="left:72.5px;width:60.4px;text-align:center;top:307.8px;font-size:5.0px;font-weight:bold;color:#1a1a1a">POM</div>
    <div class="t" style="left:132.9px;width:59.9px;text-align:center;top:307.8px;font-size:5.0px;font-weight:bold;color:#1a1a1a">TOL +/-</div>
    <div class="t" style="left:192.8px;width:51.6px;text-align:center;top:307.8px;font-size:5.0px;font-weight:bold;color:#1a1a1a">XS</div>
    <div class="t" style="left:244.4px;width:51.0px;text-align:center;top:307.8px;font-size:5.0px;font-weight:bold;color:#1a1a1a">S</div>
    <div class="t" style="left:295.4px;width:51.9px;text-align:center;top:307.8px;font-size:5.0px;font-weight:bold;color:#1a1a1a">M</div>
    <div class="t" style="left:347.3px;width:51.1px;text-align:center;top:307.8px;font-size:5.0px;font-weight:bold;color:#1a1a1a">L</div>
    <div class="t" style="left:398.4px;width:52.0px;text-align:center;top:307.8px;font-size:5.0px;font-weight:bold;color:#1a1a1a">XL</div>
    <div class="t" style="left:450.4px;width:53.0px;text-align:center;top:307.8px;font-size:5.0px;font-weight:bold;color:#1a1a1a">Grade</div>
    <div class="t" style="left:503.4px;width:19.4px;text-align:center;top:307.8px;font-size:5.0px;font-weight:bold;color:#1a1a1a">Delete</div>
    <div class="t" style="left:11.4px;width:61.1px;text-align:center;top:322.6px;font-size:5.55px;color:#1a1a1a">A</div>
    <div class="t" style="left:72.5px;width:60.4px;text-align:center;top:319.7px;font-size:5.55px;color:#1a1a1a">1/2 waist</div>
    <div class="t" style="left:132.9px;width:59.9px;text-align:center;top:322.6px;font-size:5.55px;color:#1a1a1a">1</div>
    <div class="t" style="left:192.8px;width:51.6px;text-align:center;top:322.6px;font-size:5.55px;color:#1a1a1a">38.00</div>
    <div class="t" style="left:244.4px;width:51.0px;text-align:center;top:322.6px;font-size:5.55px;color:#1a1a1a">40.50</div>
    <div class="t" style="left:295.4px;width:51.9px;text-align:center;top:322.6px;font-size:5.55px;color:#1a1a1a">43</div>
    <div class="t" style="left:347.3px;width:51.1px;text-align:center;top:322.6px;font-size:5.55px;color:#1a1a1a">45.50</div>
    <div class="t" style="left:398.4px;width:52.0px;text-align:center;top:322.6px;font-size:5.55px;color:#1a1a1a">48.00</div>
    <div class="t" style="left:450.4px;width:53.0px;text-align:center;top:322.6px;font-size:5.55px;color:#1a1a1a">2.5</div>
    <svg style="left:510.1px;top:321.8px" width="6" height="7" viewBox="0 0 6 7"><path d="M0.3 1.2 H5.7 V2 H0.3 Z M2 0.2 H4 V1.2 H2 Z M0.9 2.3 H5.1 L4.8 6.8 H1.2 Z" fill="#0a0a0a"/><path d="M2.3 3.2 V5.8 M3.7 3.2 V5.8" stroke="#fff" stroke-width="0.45"/></svg>
    <div class="t" style="left:11.4px;width:61.1px;text-align:center;top:338.5px;font-size:5.55px;color:#1a1a1a">B</div>
    <div class="t" style="left:72.5px;width:60.4px;text-align:center;top:336.1px;font-size:5.55px;color:#1a1a1a">WB height</div>
    <div class="t" style="left:132.9px;width:59.9px;text-align:center;top:338.5px;font-size:5.55px;color:#1a1a1a">1</div>
    <div class="t" style="left:192.8px;width:51.6px;text-align:center;top:338.5px;font-size:5.55px;color:#1a1a1a">4.00</div>
    <div class="t" style="left:244.4px;width:51.0px;text-align:center;top:338.5px;font-size:5.55px;color:#1a1a1a">4.00</div>
    <div class="t" style="left:295.4px;width:51.9px;text-align:center;top:338.5px;font-size:5.55px;color:#1a1a1a">4</div>
    <div class="t" style="left:347.3px;width:51.1px;text-align:center;top:338.5px;font-size:5.55px;color:#1a1a1a">4.00</div>
    <div class="t" style="left:398.4px;width:52.0px;text-align:center;top:338.5px;font-size:5.55px;color:#1a1a1a">4.00</div>
    <div class="t" style="left:450.4px;width:53.0px;text-align:center;top:338.5px;font-size:5.55px;color:#1a1a1a">0</div>
    <svg style="left:510.1px;top:337.7px" width="6" height="7" viewBox="0 0 6 7"><path d="M0.3 1.2 H5.7 V2 H0.3 Z M2 0.2 H4 V1.2 H2 Z M0.9 2.3 H5.1 L4.8 6.8 H1.2 Z" fill="#0a0a0a"/><path d="M2.3 3.2 V5.8 M3.7 3.2 V5.8" stroke="#fff" stroke-width="0.45"/></svg>
    <div class="t" style="left:11.4px;width:61.1px;text-align:center;top:354.2px;font-size:5.55px;color:#1a1a1a">C</div>
    <div class="t" style="left:72.5px;width:60.4px;text-align:center;top:351.6px;font-size:5.55px;color:#1a1a1a">1/2 hip</div>
    <div class="t" style="left:132.9px;width:59.9px;text-align:center;top:354.2px;font-size:5.55px;color:#1a1a1a">1</div>
    <div class="t" style="left:192.8px;width:51.6px;text-align:center;top:354.2px;font-size:5.55px;color:#1a1a1a">45.00</div>
    <div class="t" style="left:244.4px;width:51.0px;text-align:center;top:354.2px;font-size:5.55px;color:#1a1a1a">47.50</div>
    <div class="t" style="left:295.4px;width:51.9px;text-align:center;top:354.2px;font-size:5.55px;color:#1a1a1a">50</div>
    <div class="t" style="left:347.3px;width:51.1px;text-align:center;top:354.2px;font-size:5.55px;color:#1a1a1a">52.50</div>
    <div class="t" style="left:398.4px;width:52.0px;text-align:center;top:354.2px;font-size:5.55px;color:#1a1a1a">55.00</div>
    <div class="t" style="left:450.4px;width:53.0px;text-align:center;top:354.2px;font-size:5.55px;color:#1a1a1a">2.5</div>
    <svg style="left:510.1px;top:353.4px" width="6" height="7" viewBox="0 0 6 7"><path d="M0.3 1.2 H5.7 V2 H0.3 Z M2 0.2 H4 V1.2 H2 Z M0.9 2.3 H5.1 L4.8 6.8 H1.2 Z" fill="#0a0a0a"/><path d="M2.3 3.2 V5.8 M3.7 3.2 V5.8" stroke="#fff" stroke-width="0.45"/></svg>
    <div class="t" style="left:11.4px;width:61.1px;text-align:center;top:369.9px;font-size:5.55px;color:#1a1a1a">D</div>
    <div class="t" style="left:72.5px;width:60.4px;text-align:center;top:367.3px;font-size:5.55px;color:#1a1a1a">Hem opening</div>
    <div class="t" style="left:132.9px;width:59.9px;text-align:center;top:369.9px;font-size:5.55px;color:#1a1a1a">1</div>
    <div class="t" style="left:192.8px;width:51.6px;text-align:center;top:369.9px;font-size:5.55px;color:#1a1a1a">49.00</div>
    <div class="t" style="left:244.4px;width:51.0px;text-align:center;top:369.9px;font-size:5.55px;color:#1a1a1a">51.50</div>
    <div class="t" style="left:295.4px;width:51.9px;text-align:center;top:369.9px;font-size:5.55px;color:#1a1a1a">54</div>
    <div class="t" style="left:347.3px;width:51.1px;text-align:center;top:369.9px;font-size:5.55px;color:#1a1a1a">56.50</div>
    <div class="t" style="left:398.4px;width:52.0px;text-align:center;top:369.9px;font-size:5.55px;color:#1a1a1a">59.00</div>
    <div class="t" style="left:450.4px;width:53.0px;text-align:center;top:369.9px;font-size:5.55px;color:#1a1a1a">2.5</div>
    <svg style="left:510.1px;top:369.1px" width="6" height="7" viewBox="0 0 6 7"><path d="M0.3 1.2 H5.7 V2 H0.3 Z M2 0.2 H4 V1.2 H2 Z M0.9 2.3 H5.1 L4.8 6.8 H1.2 Z" fill="#0a0a0a"/><path d="M2.3 3.2 V5.8 M3.7 3.2 V5.8" stroke="#fff" stroke-width="0.45"/></svg>
    <div class="t" style="left:11.4px;width:61.1px;text-align:center;top:385.7px;font-size:5.55px;color:#1a1a1a">F</div>
    <div class="t" style="left:72.5px;width:60.4px;text-align:center;top:383.1px;font-size:5.55px;color:#1a1a1a">Binding width</div>
    <div class="t" style="left:132.9px;width:59.9px;text-align:center;top:385.7px;font-size:5.55px;color:#1a1a1a">1</div>
    <div class="t" style="left:192.8px;width:51.6px;text-align:center;top:385.7px;font-size:5.55px;color:#1a1a1a">2.00</div>
    <div class="t" style="left:244.4px;width:51.0px;text-align:center;top:385.7px;font-size:5.55px;color:#1a1a1a">2.00</div>
    <div class="t" style="left:295.4px;width:51.9px;text-align:center;top:385.7px;font-size:5.55px;color:#1a1a1a">2</div>
    <div class="t" style="left:347.3px;width:51.1px;text-align:center;top:385.7px;font-size:5.55px;color:#1a1a1a">2.00</div>
    <div class="t" style="left:398.4px;width:52.0px;text-align:center;top:385.7px;font-size:5.55px;color:#1a1a1a">2.00</div>
    <div class="t" style="left:450.4px;width:53.0px;text-align:center;top:385.7px;font-size:5.55px;color:#1a1a1a">0</div>
    <svg style="left:510.1px;top:384.9px" width="6" height="7" viewBox="0 0 6 7"><path d="M0.3 1.2 H5.7 V2 H0.3 Z M2 0.2 H4 V1.2 H2 Z M0.9 2.3 H5.1 L4.8 6.8 H1.2 Z" fill="#0a0a0a"/><path d="M2.3 3.2 V5.8 M3.7 3.2 V5.8" stroke="#fff" stroke-width="0.45"/></svg>
    <div class="t" style="left:11.4px;width:61.1px;text-align:center;top:401.6px;font-size:5.55px;color:#1a1a1a">G</div>
    <div class="t" style="left:72.5px;width:60.4px;text-align:center;top:398.9px;font-size:5.55px;color:#1a1a1a">Bk rise ex. wb</div>
    <div class="t" style="left:132.9px;width:59.9px;text-align:center;top:401.6px;font-size:5.55px;color:#1a1a1a">.5</div>
    <div class="t" style="left:192.8px;width:51.6px;text-align:center;top:401.6px;font-size:5.55px;color:#1a1a1a">21.00</div>
    <div class="t" style="left:244.4px;width:51.0px;text-align:center;top:401.6px;font-size:5.55px;color:#1a1a1a">22.00</div>
    <div class="t" style="left:295.4px;width:51.9px;text-align:center;top:401.6px;font-size:5.55px;color:#1a1a1a">23</div>
    <div class="t" style="left:347.3px;width:51.1px;text-align:center;top:401.6px;font-size:5.55px;color:#1a1a1a">24.00</div>
    <div class="t" style="left:398.4px;width:52.0px;text-align:center;top:401.6px;font-size:5.55px;color:#1a1a1a">25.00</div>
    <div class="t" style="left:450.4px;width:53.0px;text-align:center;top:401.6px;font-size:5.55px;color:#1a1a1a">1</div>
    <svg style="left:510.1px;top:400.8px" width="6" height="7" viewBox="0 0 6 7"><path d="M0.3 1.2 H5.7 V2 H0.3 Z M2 0.2 H4 V1.2 H2 Z M0.9 2.3 H5.1 L4.8 6.8 H1.2 Z" fill="#0a0a0a"/><path d="M2.3 3.2 V5.8 M3.7 3.2 V5.8" stroke="#fff" stroke-width="0.45"/></svg>
  </div>
  <div class="abs" id="pbottom"></div>
  <div class="abs" style="left:257px;top:535.6px;width:14px;height:2px;background:repeating-linear-gradient(90deg,#2e2e2e 0 1.2px,#444 1.2px 2px)"></div>
</div>
</body>
</html>
